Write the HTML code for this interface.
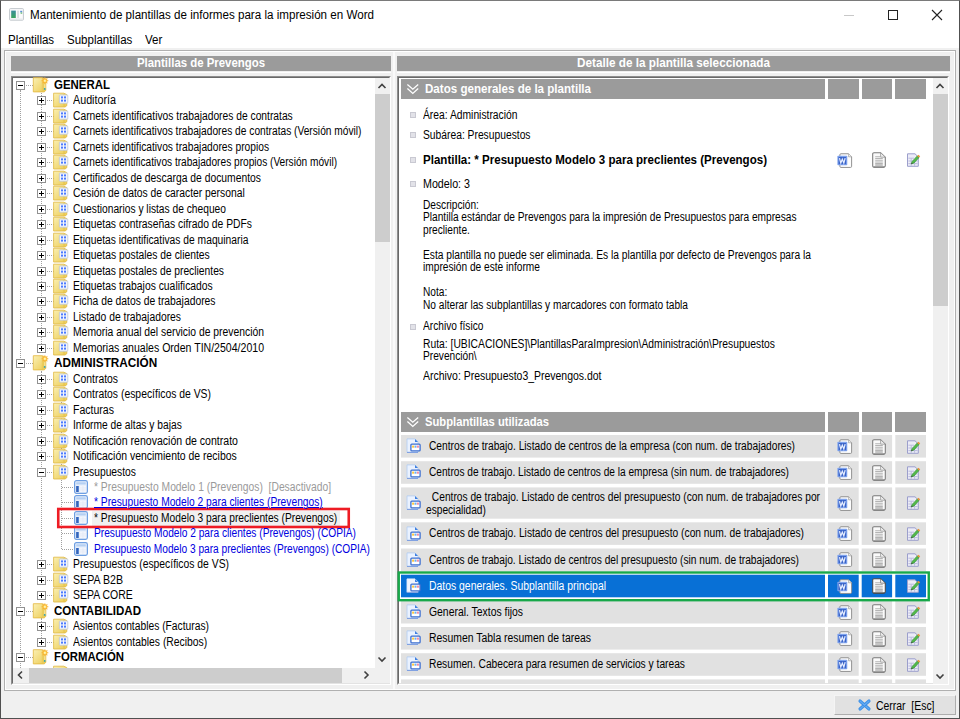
<!DOCTYPE html>
<html lang="es"><head><meta charset="utf-8"><title>Mantenimiento de plantillas de informes para la impresión en Word</title>
<style>
html,body{margin:0;padding:0;background:#f0f0f0;}
body{width:960px;height:719px;position:relative;overflow:hidden;font-family:'Liberation Sans',sans-serif;}
#w div{position:absolute;box-sizing:border-box;}
#w svg{position:absolute;overflow:visible;}
#w span.t{position:absolute;white-space:pre;transform-origin:0 50%;line-height:16px;height:16px;}
</style></head><body><div id="w">
<svg width="0" height="0" style="left:0;top:0"><defs><linearGradient id="fg1" x1="0" y1="0" x2="1" y2="1"><stop offset="0" stop-color="#faf0b4"/><stop offset="1" stop-color="#eccb52"/></linearGradient></defs></svg>
<div style="left:0px;top:0px;width:960px;height:719px;background:#f0f0f0;border:1px solid #505050;border-top-color:#7a7a7a;"></div>
<div style="left:1px;top:1px;width:958px;height:47px;background:#fff;"></div>
<svg style="left:8.5px;top:8px" width="15" height="13" viewBox="0 0 15 13"><defs><linearGradient id="tg" x1="0" y1="0" x2="0" y2="1"><stop offset="0" stop-color="#3c8c9c"/><stop offset="1" stop-color="#3aa55e"/></linearGradient></defs><rect x="0.6" y="0.6" width="13.8" height="11.6" rx="0.8" fill="#fbfbfc" stroke="#c3c8cd" stroke-width="1"/><rect x="2.2" y="2.6" width="4.6" height="7.4" fill="url(#tg)"/><rect x="8.3" y="2.6" width="1.5" height="7.4" fill="#d4d8dc"/><rect x="11.2" y="2.8" width="2" height="1.6" fill="#5b8fd6"/><rect x="11.6" y="4.4" width="1.6" height="1.4" fill="#6fc07a"/><rect x="1.4" y="10.6" width="12.2" height="1" fill="#e3e6e9"/></svg>
<div style="left:844px;top:15px;width:10px;height:1px;background:#c8c8c8;"></div>
<div style="left:888px;top:10px;width:10px;height:10px;background:transparent;border:1px solid #222;"></div>
<svg style="left:931px;top:9px" width="12" height="12" viewBox="0 0 12 12"><path d="M1 1 L11 11 M11 1 L1 11" stroke="#222" stroke-width="1.1" fill="none"/></svg>
<div style="left:4px;top:50px;width:952px;height:641px;background:transparent;border:1px solid #b0b0b0;"></div>
<div style="left:5px;top:51px;width:950px;height:639px;background:transparent;border:1px solid #fff;"></div>
<div style="left:393px;top:52px;width:2px;height:637px;background:#fafafa;"></div>
<div style="left:11px;top:56px;width:380px;height:15px;background:#9b9b9b;"></div>
<div style="left:11px;top:72px;width:380px;height:1px;background:#fff;"></div>
<div style="left:397px;top:56px;width:553px;height:15px;background:#9b9b9b;"></div>
<div style="left:397px;top:72px;width:553px;height:1px;background:#fff;"></div>
<div style="left:11px;top:76px;width:380px;height:609px;background:#fff;border:1px solid #8e8e8e;border-right-color:#fff;border-bottom-color:#fff;"></div>
<div style="left:12px;top:77px;width:378px;height:607px;background:#fff;border:1px solid #696969;border-right-color:#e3e3e3;border-bottom-color:#e3e3e3;"></div>
<div style="left:375px;top:78px;width:15px;height:590px;background:#f0f0f0;"></div>
<div style="left:375px;top:94px;width:15px;height:148px;background:#cdcdcd;"></div>
<div style="left:13px;top:668px;width:377px;height:15px;background:#f0f0f0;"></div>
<div style="left:29px;top:668px;width:313px;height:15px;background:#cdcdcd;"></div>
<svg style="left:378px;top:83px" width="8" height="6" viewBox="0 0 8 6"><path d="M0.5 5 L4 1.5 L7.5 5" stroke="#404040" stroke-width="1.6" fill="none"/></svg>
<svg style="left:378px;top:656px" width="8" height="6" viewBox="0 0 8 6"><path d="M0.5 1.5 L4 5 L7.5 1.5" stroke="#404040" stroke-width="1.6" fill="none"/></svg>
<svg style="left:17px;top:671px" width="6" height="8" viewBox="0 0 6 8"><path d="M5 0.5 L1.5 4 L5 7.5" stroke="#404040" stroke-width="1.6" fill="none"/></svg>
<svg style="left:363px;top:671px" width="6" height="8" viewBox="0 0 6 8"><path d="M1.5 0.5 L5 4 L1.5 7.5" stroke="#404040" stroke-width="1.6" fill="none"/></svg>
<div style="left:20px;top:90px;width:1px;height:578px;background:transparent;border-left:1px dotted #a0a0a0;"></div>
<div style="left:41px;top:93px;width:1px;height:251px;background:transparent;border-left:1px dotted #a0a0a0;"></div>
<div style="left:41px;top:371px;width:1px;height:208px;background:transparent;border-left:1px dotted #a0a0a0;"></div>
<div style="left:41px;top:618px;width:1px;height:24px;background:transparent;border-left:1px dotted #a0a0a0;"></div>
<div style="left:61px;top:395px;width:1px;height:154px;background:transparent;border-left:1px dotted #a0a0a0;"></div>
<div style="left:16px;top:81px;width:9px;height:9px;background:#fff;border:1px solid #919191;"></div>
<div style="left:18px;top:85px;width:5px;height:1px;background:#000;"></div>
<div style="left:26px;top:85px;width:7px;height:1px;background:transparent;border-top:1px dotted #a0a0a0;"></div>
<svg style="left:32px;top:77px" width="16" height="16" viewBox="0 0 16 16"><path d="M1.3 0.7 L10.3 0.7 L13.8 2.2 L13.8 13.4 L12.2 14.9 L1.3 14.9 Z" fill="url(#fg1)" stroke="#e3b63c" stroke-width="0.8"/><path d="M10.3 1 L10.3 14.6" stroke="#e6c250" stroke-width="0.6"/><path d="M10.6 1.4 L13.4 2.6 L13.4 13.2 L12 14.5 L10.6 14.5 Z" fill="#eacb58"/><path d="M12.8 6.5 L12.8 12" stroke="#f8ecb4" stroke-width="0.9"/><circle cx="12.7" cy="11.9" r="0.95" fill="#2fa0b4"/><polygon points="12.90,0.30 13.63,2.04 15.37,1.33 14.66,3.07 16.40,3.80 14.66,4.53 15.37,6.27 13.63,5.56 12.90,7.30 12.17,5.56 10.43,6.27 11.14,4.53 9.40,3.80 11.14,3.07 10.43,1.33 12.17,2.04" fill="#f6a623" stroke="#f9c04a" stroke-width="0.4"/><circle cx="12.9" cy="3.8" r="1.7" fill="#ffd95a"/><circle cx="12.9" cy="3.8" r="0.9" fill="#fff6c8"/></svg>
<div style="left:37px;top:96px;width:9px;height:9px;background:#fff;border:1px solid #919191;"></div>
<div style="left:39px;top:100px;width:5px;height:1px;background:#000;"></div>
<div style="left:41px;top:98px;width:1px;height:5px;background:#000;"></div>
<div style="left:47px;top:100px;width:7px;height:1px;background:transparent;border-top:1px dotted #a0a0a0;"></div>
<svg style="left:53px;top:92px" width="16" height="16" viewBox="0 0 16 16"><path d="M0.6 1.2 L10.8 1.2 L13.8 2.6 L13.8 13.4 L12.4 15 L0.6 15 Z" fill="url(#fg1)" stroke="#e0b740" stroke-width="0.8"/><path d="M11 1.8 L11 14.6" stroke="#e2bc48" stroke-width="0.8"/><rect x="6.4" y="3" width="8.4" height="8.2" rx="0.8" fill="#f4f6fb" stroke="#bcc6da" stroke-width="0.8"/><rect x="8" y="4.4" width="2" height="2" fill="#4c7bff"/><rect x="11" y="4.4" width="2" height="2" fill="#4c7bff"/><rect x="8" y="7.6" width="2" height="2" fill="#4c7bff"/><rect x="11" y="7.6" width="2" height="2" fill="#4c7bff"/></svg>
<div style="left:37px;top:112px;width:9px;height:9px;background:#fff;border:1px solid #919191;"></div>
<div style="left:39px;top:116px;width:5px;height:1px;background:#000;"></div>
<div style="left:41px;top:114px;width:1px;height:5px;background:#000;"></div>
<div style="left:47px;top:116px;width:7px;height:1px;background:transparent;border-top:1px dotted #a0a0a0;"></div>
<svg style="left:53px;top:108px" width="16" height="16" viewBox="0 0 16 16"><path d="M0.6 1.2 L10.8 1.2 L13.8 2.6 L13.8 13.4 L12.4 15 L0.6 15 Z" fill="url(#fg1)" stroke="#e0b740" stroke-width="0.8"/><path d="M11 1.8 L11 14.6" stroke="#e2bc48" stroke-width="0.8"/><rect x="6.4" y="3" width="8.4" height="8.2" rx="0.8" fill="#f4f6fb" stroke="#bcc6da" stroke-width="0.8"/><rect x="8" y="4.4" width="2" height="2" fill="#4c7bff"/><rect x="11" y="4.4" width="2" height="2" fill="#4c7bff"/><rect x="8" y="7.6" width="2" height="2" fill="#4c7bff"/><rect x="11" y="7.6" width="2" height="2" fill="#4c7bff"/></svg>
<div style="left:37px;top:127px;width:9px;height:9px;background:#fff;border:1px solid #919191;"></div>
<div style="left:39px;top:131px;width:5px;height:1px;background:#000;"></div>
<div style="left:41px;top:129px;width:1px;height:5px;background:#000;"></div>
<div style="left:47px;top:131px;width:7px;height:1px;background:transparent;border-top:1px dotted #a0a0a0;"></div>
<svg style="left:53px;top:123px" width="16" height="16" viewBox="0 0 16 16"><path d="M0.6 1.2 L10.8 1.2 L13.8 2.6 L13.8 13.4 L12.4 15 L0.6 15 Z" fill="url(#fg1)" stroke="#e0b740" stroke-width="0.8"/><path d="M11 1.8 L11 14.6" stroke="#e2bc48" stroke-width="0.8"/><rect x="6.4" y="3" width="8.4" height="8.2" rx="0.8" fill="#f4f6fb" stroke="#bcc6da" stroke-width="0.8"/><rect x="8" y="4.4" width="2" height="2" fill="#4c7bff"/><rect x="11" y="4.4" width="2" height="2" fill="#4c7bff"/><rect x="8" y="7.6" width="2" height="2" fill="#4c7bff"/><rect x="11" y="7.6" width="2" height="2" fill="#4c7bff"/></svg>
<div style="left:37px;top:143px;width:9px;height:9px;background:#fff;border:1px solid #919191;"></div>
<div style="left:39px;top:147px;width:5px;height:1px;background:#000;"></div>
<div style="left:41px;top:145px;width:1px;height:5px;background:#000;"></div>
<div style="left:47px;top:147px;width:7px;height:1px;background:transparent;border-top:1px dotted #a0a0a0;"></div>
<svg style="left:53px;top:139px" width="16" height="16" viewBox="0 0 16 16"><path d="M0.6 1.2 L10.8 1.2 L13.8 2.6 L13.8 13.4 L12.4 15 L0.6 15 Z" fill="url(#fg1)" stroke="#e0b740" stroke-width="0.8"/><path d="M11 1.8 L11 14.6" stroke="#e2bc48" stroke-width="0.8"/><rect x="6.4" y="3" width="8.4" height="8.2" rx="0.8" fill="#f4f6fb" stroke="#bcc6da" stroke-width="0.8"/><rect x="8" y="4.4" width="2" height="2" fill="#4c7bff"/><rect x="11" y="4.4" width="2" height="2" fill="#4c7bff"/><rect x="8" y="7.6" width="2" height="2" fill="#4c7bff"/><rect x="11" y="7.6" width="2" height="2" fill="#4c7bff"/></svg>
<div style="left:37px;top:158px;width:9px;height:9px;background:#fff;border:1px solid #919191;"></div>
<div style="left:39px;top:162px;width:5px;height:1px;background:#000;"></div>
<div style="left:41px;top:160px;width:1px;height:5px;background:#000;"></div>
<div style="left:47px;top:162px;width:7px;height:1px;background:transparent;border-top:1px dotted #a0a0a0;"></div>
<svg style="left:53px;top:154px" width="16" height="16" viewBox="0 0 16 16"><path d="M0.6 1.2 L10.8 1.2 L13.8 2.6 L13.8 13.4 L12.4 15 L0.6 15 Z" fill="url(#fg1)" stroke="#e0b740" stroke-width="0.8"/><path d="M11 1.8 L11 14.6" stroke="#e2bc48" stroke-width="0.8"/><rect x="6.4" y="3" width="8.4" height="8.2" rx="0.8" fill="#f4f6fb" stroke="#bcc6da" stroke-width="0.8"/><rect x="8" y="4.4" width="2" height="2" fill="#4c7bff"/><rect x="11" y="4.4" width="2" height="2" fill="#4c7bff"/><rect x="8" y="7.6" width="2" height="2" fill="#4c7bff"/><rect x="11" y="7.6" width="2" height="2" fill="#4c7bff"/></svg>
<div style="left:37px;top:174px;width:9px;height:9px;background:#fff;border:1px solid #919191;"></div>
<div style="left:39px;top:178px;width:5px;height:1px;background:#000;"></div>
<div style="left:41px;top:176px;width:1px;height:5px;background:#000;"></div>
<div style="left:47px;top:178px;width:7px;height:1px;background:transparent;border-top:1px dotted #a0a0a0;"></div>
<svg style="left:53px;top:170px" width="16" height="16" viewBox="0 0 16 16"><path d="M0.6 1.2 L10.8 1.2 L13.8 2.6 L13.8 13.4 L12.4 15 L0.6 15 Z" fill="url(#fg1)" stroke="#e0b740" stroke-width="0.8"/><path d="M11 1.8 L11 14.6" stroke="#e2bc48" stroke-width="0.8"/><rect x="6.4" y="3" width="8.4" height="8.2" rx="0.8" fill="#f4f6fb" stroke="#bcc6da" stroke-width="0.8"/><rect x="8" y="4.4" width="2" height="2" fill="#4c7bff"/><rect x="11" y="4.4" width="2" height="2" fill="#4c7bff"/><rect x="8" y="7.6" width="2" height="2" fill="#4c7bff"/><rect x="11" y="7.6" width="2" height="2" fill="#4c7bff"/></svg>
<div style="left:37px;top:189px;width:9px;height:9px;background:#fff;border:1px solid #919191;"></div>
<div style="left:39px;top:193px;width:5px;height:1px;background:#000;"></div>
<div style="left:41px;top:191px;width:1px;height:5px;background:#000;"></div>
<div style="left:47px;top:193px;width:7px;height:1px;background:transparent;border-top:1px dotted #a0a0a0;"></div>
<svg style="left:53px;top:185px" width="16" height="16" viewBox="0 0 16 16"><path d="M0.6 1.2 L10.8 1.2 L13.8 2.6 L13.8 13.4 L12.4 15 L0.6 15 Z" fill="url(#fg1)" stroke="#e0b740" stroke-width="0.8"/><path d="M11 1.8 L11 14.6" stroke="#e2bc48" stroke-width="0.8"/><rect x="6.4" y="3" width="8.4" height="8.2" rx="0.8" fill="#f4f6fb" stroke="#bcc6da" stroke-width="0.8"/><rect x="8" y="4.4" width="2" height="2" fill="#4c7bff"/><rect x="11" y="4.4" width="2" height="2" fill="#4c7bff"/><rect x="8" y="7.6" width="2" height="2" fill="#4c7bff"/><rect x="11" y="7.6" width="2" height="2" fill="#4c7bff"/></svg>
<div style="left:37px;top:205px;width:9px;height:9px;background:#fff;border:1px solid #919191;"></div>
<div style="left:39px;top:209px;width:5px;height:1px;background:#000;"></div>
<div style="left:41px;top:207px;width:1px;height:5px;background:#000;"></div>
<div style="left:47px;top:209px;width:7px;height:1px;background:transparent;border-top:1px dotted #a0a0a0;"></div>
<svg style="left:53px;top:201px" width="16" height="16" viewBox="0 0 16 16"><path d="M0.6 1.2 L10.8 1.2 L13.8 2.6 L13.8 13.4 L12.4 15 L0.6 15 Z" fill="url(#fg1)" stroke="#e0b740" stroke-width="0.8"/><path d="M11 1.8 L11 14.6" stroke="#e2bc48" stroke-width="0.8"/><rect x="6.4" y="3" width="8.4" height="8.2" rx="0.8" fill="#f4f6fb" stroke="#bcc6da" stroke-width="0.8"/><rect x="8" y="4.4" width="2" height="2" fill="#4c7bff"/><rect x="11" y="4.4" width="2" height="2" fill="#4c7bff"/><rect x="8" y="7.6" width="2" height="2" fill="#4c7bff"/><rect x="11" y="7.6" width="2" height="2" fill="#4c7bff"/></svg>
<div style="left:37px;top:220px;width:9px;height:9px;background:#fff;border:1px solid #919191;"></div>
<div style="left:39px;top:224px;width:5px;height:1px;background:#000;"></div>
<div style="left:41px;top:222px;width:1px;height:5px;background:#000;"></div>
<div style="left:47px;top:224px;width:7px;height:1px;background:transparent;border-top:1px dotted #a0a0a0;"></div>
<svg style="left:53px;top:216px" width="16" height="16" viewBox="0 0 16 16"><path d="M0.6 1.2 L10.8 1.2 L13.8 2.6 L13.8 13.4 L12.4 15 L0.6 15 Z" fill="url(#fg1)" stroke="#e0b740" stroke-width="0.8"/><path d="M11 1.8 L11 14.6" stroke="#e2bc48" stroke-width="0.8"/><rect x="6.4" y="3" width="8.4" height="8.2" rx="0.8" fill="#f4f6fb" stroke="#bcc6da" stroke-width="0.8"/><rect x="8" y="4.4" width="2" height="2" fill="#4c7bff"/><rect x="11" y="4.4" width="2" height="2" fill="#4c7bff"/><rect x="8" y="7.6" width="2" height="2" fill="#4c7bff"/><rect x="11" y="7.6" width="2" height="2" fill="#4c7bff"/></svg>
<div style="left:37px;top:236px;width:9px;height:9px;background:#fff;border:1px solid #919191;"></div>
<div style="left:39px;top:240px;width:5px;height:1px;background:#000;"></div>
<div style="left:41px;top:238px;width:1px;height:5px;background:#000;"></div>
<div style="left:47px;top:240px;width:7px;height:1px;background:transparent;border-top:1px dotted #a0a0a0;"></div>
<svg style="left:53px;top:232px" width="16" height="16" viewBox="0 0 16 16"><path d="M0.6 1.2 L10.8 1.2 L13.8 2.6 L13.8 13.4 L12.4 15 L0.6 15 Z" fill="url(#fg1)" stroke="#e0b740" stroke-width="0.8"/><path d="M11 1.8 L11 14.6" stroke="#e2bc48" stroke-width="0.8"/><rect x="6.4" y="3" width="8.4" height="8.2" rx="0.8" fill="#f4f6fb" stroke="#bcc6da" stroke-width="0.8"/><rect x="8" y="4.4" width="2" height="2" fill="#4c7bff"/><rect x="11" y="4.4" width="2" height="2" fill="#4c7bff"/><rect x="8" y="7.6" width="2" height="2" fill="#4c7bff"/><rect x="11" y="7.6" width="2" height="2" fill="#4c7bff"/></svg>
<div style="left:37px;top:251px;width:9px;height:9px;background:#fff;border:1px solid #919191;"></div>
<div style="left:39px;top:255px;width:5px;height:1px;background:#000;"></div>
<div style="left:41px;top:253px;width:1px;height:5px;background:#000;"></div>
<div style="left:47px;top:255px;width:7px;height:1px;background:transparent;border-top:1px dotted #a0a0a0;"></div>
<svg style="left:53px;top:247px" width="16" height="16" viewBox="0 0 16 16"><path d="M0.6 1.2 L10.8 1.2 L13.8 2.6 L13.8 13.4 L12.4 15 L0.6 15 Z" fill="url(#fg1)" stroke="#e0b740" stroke-width="0.8"/><path d="M11 1.8 L11 14.6" stroke="#e2bc48" stroke-width="0.8"/><rect x="6.4" y="3" width="8.4" height="8.2" rx="0.8" fill="#f4f6fb" stroke="#bcc6da" stroke-width="0.8"/><rect x="8" y="4.4" width="2" height="2" fill="#4c7bff"/><rect x="11" y="4.4" width="2" height="2" fill="#4c7bff"/><rect x="8" y="7.6" width="2" height="2" fill="#4c7bff"/><rect x="11" y="7.6" width="2" height="2" fill="#4c7bff"/></svg>
<div style="left:37px;top:267px;width:9px;height:9px;background:#fff;border:1px solid #919191;"></div>
<div style="left:39px;top:271px;width:5px;height:1px;background:#000;"></div>
<div style="left:41px;top:269px;width:1px;height:5px;background:#000;"></div>
<div style="left:47px;top:271px;width:7px;height:1px;background:transparent;border-top:1px dotted #a0a0a0;"></div>
<svg style="left:53px;top:263px" width="16" height="16" viewBox="0 0 16 16"><path d="M0.6 1.2 L10.8 1.2 L13.8 2.6 L13.8 13.4 L12.4 15 L0.6 15 Z" fill="url(#fg1)" stroke="#e0b740" stroke-width="0.8"/><path d="M11 1.8 L11 14.6" stroke="#e2bc48" stroke-width="0.8"/><rect x="6.4" y="3" width="8.4" height="8.2" rx="0.8" fill="#f4f6fb" stroke="#bcc6da" stroke-width="0.8"/><rect x="8" y="4.4" width="2" height="2" fill="#4c7bff"/><rect x="11" y="4.4" width="2" height="2" fill="#4c7bff"/><rect x="8" y="7.6" width="2" height="2" fill="#4c7bff"/><rect x="11" y="7.6" width="2" height="2" fill="#4c7bff"/></svg>
<div style="left:37px;top:282px;width:9px;height:9px;background:#fff;border:1px solid #919191;"></div>
<div style="left:39px;top:286px;width:5px;height:1px;background:#000;"></div>
<div style="left:41px;top:284px;width:1px;height:5px;background:#000;"></div>
<div style="left:47px;top:286px;width:7px;height:1px;background:transparent;border-top:1px dotted #a0a0a0;"></div>
<svg style="left:53px;top:278px" width="16" height="16" viewBox="0 0 16 16"><path d="M0.6 1.2 L10.8 1.2 L13.8 2.6 L13.8 13.4 L12.4 15 L0.6 15 Z" fill="url(#fg1)" stroke="#e0b740" stroke-width="0.8"/><path d="M11 1.8 L11 14.6" stroke="#e2bc48" stroke-width="0.8"/><rect x="6.4" y="3" width="8.4" height="8.2" rx="0.8" fill="#f4f6fb" stroke="#bcc6da" stroke-width="0.8"/><rect x="8" y="4.4" width="2" height="2" fill="#4c7bff"/><rect x="11" y="4.4" width="2" height="2" fill="#4c7bff"/><rect x="8" y="7.6" width="2" height="2" fill="#4c7bff"/><rect x="11" y="7.6" width="2" height="2" fill="#4c7bff"/></svg>
<div style="left:37px;top:297px;width:9px;height:9px;background:#fff;border:1px solid #919191;"></div>
<div style="left:39px;top:301px;width:5px;height:1px;background:#000;"></div>
<div style="left:41px;top:299px;width:1px;height:5px;background:#000;"></div>
<div style="left:47px;top:301px;width:7px;height:1px;background:transparent;border-top:1px dotted #a0a0a0;"></div>
<svg style="left:53px;top:293px" width="16" height="16" viewBox="0 0 16 16"><path d="M0.6 1.2 L10.8 1.2 L13.8 2.6 L13.8 13.4 L12.4 15 L0.6 15 Z" fill="url(#fg1)" stroke="#e0b740" stroke-width="0.8"/><path d="M11 1.8 L11 14.6" stroke="#e2bc48" stroke-width="0.8"/><rect x="6.4" y="3" width="8.4" height="8.2" rx="0.8" fill="#f4f6fb" stroke="#bcc6da" stroke-width="0.8"/><rect x="8" y="4.4" width="2" height="2" fill="#4c7bff"/><rect x="11" y="4.4" width="2" height="2" fill="#4c7bff"/><rect x="8" y="7.6" width="2" height="2" fill="#4c7bff"/><rect x="11" y="7.6" width="2" height="2" fill="#4c7bff"/></svg>
<div style="left:37px;top:313px;width:9px;height:9px;background:#fff;border:1px solid #919191;"></div>
<div style="left:39px;top:317px;width:5px;height:1px;background:#000;"></div>
<div style="left:41px;top:315px;width:1px;height:5px;background:#000;"></div>
<div style="left:47px;top:317px;width:7px;height:1px;background:transparent;border-top:1px dotted #a0a0a0;"></div>
<svg style="left:53px;top:309px" width="16" height="16" viewBox="0 0 16 16"><path d="M0.6 1.2 L10.8 1.2 L13.8 2.6 L13.8 13.4 L12.4 15 L0.6 15 Z" fill="url(#fg1)" stroke="#e0b740" stroke-width="0.8"/><path d="M11 1.8 L11 14.6" stroke="#e2bc48" stroke-width="0.8"/><rect x="6.4" y="3" width="8.4" height="8.2" rx="0.8" fill="#f4f6fb" stroke="#bcc6da" stroke-width="0.8"/><rect x="8" y="4.4" width="2" height="2" fill="#4c7bff"/><rect x="11" y="4.4" width="2" height="2" fill="#4c7bff"/><rect x="8" y="7.6" width="2" height="2" fill="#4c7bff"/><rect x="11" y="7.6" width="2" height="2" fill="#4c7bff"/></svg>
<div style="left:37px;top:328px;width:9px;height:9px;background:#fff;border:1px solid #919191;"></div>
<div style="left:39px;top:332px;width:5px;height:1px;background:#000;"></div>
<div style="left:41px;top:330px;width:1px;height:5px;background:#000;"></div>
<div style="left:47px;top:332px;width:7px;height:1px;background:transparent;border-top:1px dotted #a0a0a0;"></div>
<svg style="left:53px;top:324px" width="16" height="16" viewBox="0 0 16 16"><path d="M0.6 1.2 L10.8 1.2 L13.8 2.6 L13.8 13.4 L12.4 15 L0.6 15 Z" fill="url(#fg1)" stroke="#e0b740" stroke-width="0.8"/><path d="M11 1.8 L11 14.6" stroke="#e2bc48" stroke-width="0.8"/><rect x="6.4" y="3" width="8.4" height="8.2" rx="0.8" fill="#f4f6fb" stroke="#bcc6da" stroke-width="0.8"/><rect x="8" y="4.4" width="2" height="2" fill="#4c7bff"/><rect x="11" y="4.4" width="2" height="2" fill="#4c7bff"/><rect x="8" y="7.6" width="2" height="2" fill="#4c7bff"/><rect x="11" y="7.6" width="2" height="2" fill="#4c7bff"/></svg>
<div style="left:37px;top:344px;width:9px;height:9px;background:#fff;border:1px solid #919191;"></div>
<div style="left:39px;top:348px;width:5px;height:1px;background:#000;"></div>
<div style="left:41px;top:346px;width:1px;height:5px;background:#000;"></div>
<div style="left:47px;top:348px;width:7px;height:1px;background:transparent;border-top:1px dotted #a0a0a0;"></div>
<svg style="left:53px;top:340px" width="16" height="16" viewBox="0 0 16 16"><path d="M0.6 1.2 L10.8 1.2 L13.8 2.6 L13.8 13.4 L12.4 15 L0.6 15 Z" fill="url(#fg1)" stroke="#e0b740" stroke-width="0.8"/><path d="M11 1.8 L11 14.6" stroke="#e2bc48" stroke-width="0.8"/><rect x="6.4" y="3" width="8.4" height="8.2" rx="0.8" fill="#f4f6fb" stroke="#bcc6da" stroke-width="0.8"/><rect x="8" y="4.4" width="2" height="2" fill="#4c7bff"/><rect x="11" y="4.4" width="2" height="2" fill="#4c7bff"/><rect x="8" y="7.6" width="2" height="2" fill="#4c7bff"/><rect x="11" y="7.6" width="2" height="2" fill="#4c7bff"/></svg>
<div style="left:16px;top:359px;width:9px;height:9px;background:#fff;border:1px solid #919191;"></div>
<div style="left:18px;top:363px;width:5px;height:1px;background:#000;"></div>
<div style="left:26px;top:363px;width:7px;height:1px;background:transparent;border-top:1px dotted #a0a0a0;"></div>
<svg style="left:32px;top:355px" width="16" height="16" viewBox="0 0 16 16"><path d="M1.3 0.7 L10.3 0.7 L13.8 2.2 L13.8 13.4 L12.2 14.9 L1.3 14.9 Z" fill="url(#fg1)" stroke="#e3b63c" stroke-width="0.8"/><path d="M10.3 1 L10.3 14.6" stroke="#e6c250" stroke-width="0.6"/><path d="M10.6 1.4 L13.4 2.6 L13.4 13.2 L12 14.5 L10.6 14.5 Z" fill="#eacb58"/><path d="M12.8 6.5 L12.8 12" stroke="#f8ecb4" stroke-width="0.9"/><circle cx="12.7" cy="11.9" r="0.95" fill="#2fa0b4"/><polygon points="12.90,0.30 13.63,2.04 15.37,1.33 14.66,3.07 16.40,3.80 14.66,4.53 15.37,6.27 13.63,5.56 12.90,7.30 12.17,5.56 10.43,6.27 11.14,4.53 9.40,3.80 11.14,3.07 10.43,1.33 12.17,2.04" fill="#f6a623" stroke="#f9c04a" stroke-width="0.4"/><circle cx="12.9" cy="3.8" r="1.7" fill="#ffd95a"/><circle cx="12.9" cy="3.8" r="0.9" fill="#fff6c8"/></svg>
<div style="left:37px;top:375px;width:9px;height:9px;background:#fff;border:1px solid #919191;"></div>
<div style="left:39px;top:379px;width:5px;height:1px;background:#000;"></div>
<div style="left:41px;top:377px;width:1px;height:5px;background:#000;"></div>
<div style="left:47px;top:379px;width:7px;height:1px;background:transparent;border-top:1px dotted #a0a0a0;"></div>
<svg style="left:53px;top:371px" width="16" height="16" viewBox="0 0 16 16"><path d="M0.6 1.2 L10.8 1.2 L13.8 2.6 L13.8 13.4 L12.4 15 L0.6 15 Z" fill="url(#fg1)" stroke="#e0b740" stroke-width="0.8"/><path d="M11 1.8 L11 14.6" stroke="#e2bc48" stroke-width="0.8"/><rect x="6.4" y="3" width="8.4" height="8.2" rx="0.8" fill="#f4f6fb" stroke="#bcc6da" stroke-width="0.8"/><rect x="8" y="4.4" width="2" height="2" fill="#4c7bff"/><rect x="11" y="4.4" width="2" height="2" fill="#4c7bff"/><rect x="8" y="7.6" width="2" height="2" fill="#4c7bff"/><rect x="11" y="7.6" width="2" height="2" fill="#4c7bff"/></svg>
<div style="left:37px;top:390px;width:9px;height:9px;background:#fff;border:1px solid #919191;"></div>
<div style="left:39px;top:394px;width:5px;height:1px;background:#000;"></div>
<div style="left:41px;top:392px;width:1px;height:5px;background:#000;"></div>
<div style="left:47px;top:394px;width:7px;height:1px;background:transparent;border-top:1px dotted #a0a0a0;"></div>
<svg style="left:53px;top:386px" width="16" height="16" viewBox="0 0 16 16"><path d="M0.6 1.2 L10.8 1.2 L13.8 2.6 L13.8 13.4 L12.4 15 L0.6 15 Z" fill="url(#fg1)" stroke="#e0b740" stroke-width="0.8"/><path d="M11 1.8 L11 14.6" stroke="#e2bc48" stroke-width="0.8"/><rect x="6.4" y="3" width="8.4" height="8.2" rx="0.8" fill="#f4f6fb" stroke="#bcc6da" stroke-width="0.8"/><rect x="8" y="4.4" width="2" height="2" fill="#4c7bff"/><rect x="11" y="4.4" width="2" height="2" fill="#4c7bff"/><rect x="8" y="7.6" width="2" height="2" fill="#4c7bff"/><rect x="11" y="7.6" width="2" height="2" fill="#4c7bff"/></svg>
<div style="left:37px;top:406px;width:9px;height:9px;background:#fff;border:1px solid #919191;"></div>
<div style="left:39px;top:410px;width:5px;height:1px;background:#000;"></div>
<div style="left:41px;top:408px;width:1px;height:5px;background:#000;"></div>
<div style="left:47px;top:410px;width:7px;height:1px;background:transparent;border-top:1px dotted #a0a0a0;"></div>
<svg style="left:53px;top:402px" width="16" height="16" viewBox="0 0 16 16"><path d="M0.6 1.2 L10.8 1.2 L13.8 2.6 L13.8 13.4 L12.4 15 L0.6 15 Z" fill="url(#fg1)" stroke="#e0b740" stroke-width="0.8"/><path d="M11 1.8 L11 14.6" stroke="#e2bc48" stroke-width="0.8"/><rect x="6.4" y="3" width="8.4" height="8.2" rx="0.8" fill="#f4f6fb" stroke="#bcc6da" stroke-width="0.8"/><rect x="8" y="4.4" width="2" height="2" fill="#4c7bff"/><rect x="11" y="4.4" width="2" height="2" fill="#4c7bff"/><rect x="8" y="7.6" width="2" height="2" fill="#4c7bff"/><rect x="11" y="7.6" width="2" height="2" fill="#4c7bff"/></svg>
<div style="left:37px;top:421px;width:9px;height:9px;background:#fff;border:1px solid #919191;"></div>
<div style="left:39px;top:425px;width:5px;height:1px;background:#000;"></div>
<div style="left:41px;top:423px;width:1px;height:5px;background:#000;"></div>
<div style="left:47px;top:425px;width:7px;height:1px;background:transparent;border-top:1px dotted #a0a0a0;"></div>
<svg style="left:53px;top:417px" width="16" height="16" viewBox="0 0 16 16"><path d="M0.6 1.2 L10.8 1.2 L13.8 2.6 L13.8 13.4 L12.4 15 L0.6 15 Z" fill="url(#fg1)" stroke="#e0b740" stroke-width="0.8"/><path d="M11 1.8 L11 14.6" stroke="#e2bc48" stroke-width="0.8"/><rect x="6.4" y="3" width="8.4" height="8.2" rx="0.8" fill="#f4f6fb" stroke="#bcc6da" stroke-width="0.8"/><rect x="8" y="4.4" width="2" height="2" fill="#4c7bff"/><rect x="11" y="4.4" width="2" height="2" fill="#4c7bff"/><rect x="8" y="7.6" width="2" height="2" fill="#4c7bff"/><rect x="11" y="7.6" width="2" height="2" fill="#4c7bff"/></svg>
<div style="left:37px;top:437px;width:9px;height:9px;background:#fff;border:1px solid #919191;"></div>
<div style="left:39px;top:441px;width:5px;height:1px;background:#000;"></div>
<div style="left:41px;top:439px;width:1px;height:5px;background:#000;"></div>
<div style="left:47px;top:441px;width:7px;height:1px;background:transparent;border-top:1px dotted #a0a0a0;"></div>
<svg style="left:53px;top:433px" width="16" height="16" viewBox="0 0 16 16"><path d="M0.6 1.2 L10.8 1.2 L13.8 2.6 L13.8 13.4 L12.4 15 L0.6 15 Z" fill="url(#fg1)" stroke="#e0b740" stroke-width="0.8"/><path d="M11 1.8 L11 14.6" stroke="#e2bc48" stroke-width="0.8"/><rect x="6.4" y="3" width="8.4" height="8.2" rx="0.8" fill="#f4f6fb" stroke="#bcc6da" stroke-width="0.8"/><rect x="8" y="4.4" width="2" height="2" fill="#4c7bff"/><rect x="11" y="4.4" width="2" height="2" fill="#4c7bff"/><rect x="8" y="7.6" width="2" height="2" fill="#4c7bff"/><rect x="11" y="7.6" width="2" height="2" fill="#4c7bff"/></svg>
<div style="left:37px;top:452px;width:9px;height:9px;background:#fff;border:1px solid #919191;"></div>
<div style="left:39px;top:456px;width:5px;height:1px;background:#000;"></div>
<div style="left:41px;top:454px;width:1px;height:5px;background:#000;"></div>
<div style="left:47px;top:456px;width:7px;height:1px;background:transparent;border-top:1px dotted #a0a0a0;"></div>
<svg style="left:53px;top:448px" width="16" height="16" viewBox="0 0 16 16"><path d="M0.6 1.2 L10.8 1.2 L13.8 2.6 L13.8 13.4 L12.4 15 L0.6 15 Z" fill="url(#fg1)" stroke="#e0b740" stroke-width="0.8"/><path d="M11 1.8 L11 14.6" stroke="#e2bc48" stroke-width="0.8"/><rect x="6.4" y="3" width="8.4" height="8.2" rx="0.8" fill="#f4f6fb" stroke="#bcc6da" stroke-width="0.8"/><rect x="8" y="4.4" width="2" height="2" fill="#4c7bff"/><rect x="11" y="4.4" width="2" height="2" fill="#4c7bff"/><rect x="8" y="7.6" width="2" height="2" fill="#4c7bff"/><rect x="11" y="7.6" width="2" height="2" fill="#4c7bff"/></svg>
<div style="left:37px;top:468px;width:9px;height:9px;background:#fff;border:1px solid #919191;"></div>
<div style="left:39px;top:472px;width:5px;height:1px;background:#000;"></div>
<div style="left:47px;top:472px;width:7px;height:1px;background:transparent;border-top:1px dotted #a0a0a0;"></div>
<svg style="left:53px;top:464px" width="16" height="16" viewBox="0 0 16 16"><path d="M0.6 1.2 L10.8 1.2 L13.8 2.6 L13.8 13.4 L12.4 15 L0.6 15 Z" fill="url(#fg1)" stroke="#e0b740" stroke-width="0.8"/><path d="M11 1.8 L11 14.6" stroke="#e2bc48" stroke-width="0.8"/><rect x="6.4" y="3" width="8.4" height="8.2" rx="0.8" fill="#f4f6fb" stroke="#bcc6da" stroke-width="0.8"/><rect x="8" y="4.4" width="2" height="2" fill="#4c7bff"/><rect x="11" y="4.4" width="2" height="2" fill="#4c7bff"/><rect x="8" y="7.6" width="2" height="2" fill="#4c7bff"/><rect x="11" y="7.6" width="2" height="2" fill="#4c7bff"/></svg>
<div style="left:62px;top:487px;width:13px;height:1px;background:transparent;border-top:1px dotted #a0a0a0;"></div>
<svg style="left:74px;top:480px" width="14" height="14" viewBox="0 0 14 14"><rect x="0.6" y="0.6" width="12.8" height="12.8" rx="1.8" fill="#e9f0fb" stroke="#6e9fe2" stroke-width="1.2"/><rect x="2.2" y="2.2" width="9.6" height="2.3" rx="0.5" fill="#b5d0f3"/><rect x="2.4" y="6" width="2.4" height="6" fill="#3a6fc8"/><rect x="2.4" y="6" width="1" height="6" fill="#2a58ad"/><rect x="6" y="6" width="6" height="6" fill="#f3f6fc"/><path d="M6 8 H12 M6 10 H12 M9 6 V12" stroke="#dfe6f3" stroke-width="0.6"/></svg>
<div style="left:62px;top:502px;width:13px;height:1px;background:transparent;border-top:1px dotted #a0a0a0;"></div>
<svg style="left:74px;top:495px" width="14" height="14" viewBox="0 0 14 14"><rect x="0.6" y="0.6" width="12.8" height="12.8" rx="1.8" fill="#e9f0fb" stroke="#6e9fe2" stroke-width="1.2"/><rect x="2.2" y="2.2" width="9.6" height="2.3" rx="0.5" fill="#b5d0f3"/><rect x="2.4" y="6" width="2.4" height="6" fill="#3a6fc8"/><rect x="2.4" y="6" width="1" height="6" fill="#2a58ad"/><rect x="6" y="6" width="6" height="6" fill="#f3f6fc"/><path d="M6 8 H12 M6 10 H12 M9 6 V12" stroke="#dfe6f3" stroke-width="0.6"/></svg>
<div style="left:62px;top:518px;width:13px;height:1px;background:transparent;border-top:1px dotted #a0a0a0;"></div>
<svg style="left:74px;top:511px" width="14" height="14" viewBox="0 0 14 14"><rect x="0.6" y="0.6" width="12.8" height="12.8" rx="1.8" fill="#e9f0fb" stroke="#6e9fe2" stroke-width="1.2"/><rect x="2.2" y="2.2" width="9.6" height="2.3" rx="0.5" fill="#b5d0f3"/><rect x="2.4" y="6" width="2.4" height="6" fill="#3a6fc8"/><rect x="2.4" y="6" width="1" height="6" fill="#2a58ad"/><rect x="6" y="6" width="6" height="6" fill="#f3f6fc"/><path d="M6 8 H12 M6 10 H12 M9 6 V12" stroke="#dfe6f3" stroke-width="0.6"/></svg>
<div style="left:92px;top:511px;width:248px;height:15px;background:#f0f0f0;"></div>
<div style="left:62px;top:533px;width:13px;height:1px;background:transparent;border-top:1px dotted #a0a0a0;"></div>
<svg style="left:74px;top:526px" width="14" height="14" viewBox="0 0 14 14"><rect x="0.6" y="0.6" width="12.8" height="12.8" rx="1.8" fill="#e9f0fb" stroke="#6e9fe2" stroke-width="1.2"/><rect x="2.2" y="2.2" width="9.6" height="2.3" rx="0.5" fill="#b5d0f3"/><rect x="2.4" y="6" width="2.4" height="6" fill="#3a6fc8"/><rect x="2.4" y="6" width="1" height="6" fill="#2a58ad"/><rect x="6" y="6" width="6" height="6" fill="#f3f6fc"/><path d="M6 8 H12 M6 10 H12 M9 6 V12" stroke="#dfe6f3" stroke-width="0.6"/></svg>
<div style="left:62px;top:549px;width:13px;height:1px;background:transparent;border-top:1px dotted #a0a0a0;"></div>
<svg style="left:74px;top:542px" width="14" height="14" viewBox="0 0 14 14"><rect x="0.6" y="0.6" width="12.8" height="12.8" rx="1.8" fill="#e9f0fb" stroke="#6e9fe2" stroke-width="1.2"/><rect x="2.2" y="2.2" width="9.6" height="2.3" rx="0.5" fill="#b5d0f3"/><rect x="2.4" y="6" width="2.4" height="6" fill="#3a6fc8"/><rect x="2.4" y="6" width="1" height="6" fill="#2a58ad"/><rect x="6" y="6" width="6" height="6" fill="#f3f6fc"/><path d="M6 8 H12 M6 10 H12 M9 6 V12" stroke="#dfe6f3" stroke-width="0.6"/></svg>
<div style="left:37px;top:560px;width:9px;height:9px;background:#fff;border:1px solid #919191;"></div>
<div style="left:39px;top:564px;width:5px;height:1px;background:#000;"></div>
<div style="left:41px;top:562px;width:1px;height:5px;background:#000;"></div>
<div style="left:47px;top:564px;width:7px;height:1px;background:transparent;border-top:1px dotted #a0a0a0;"></div>
<svg style="left:53px;top:556px" width="16" height="16" viewBox="0 0 16 16"><path d="M0.6 1.2 L10.8 1.2 L13.8 2.6 L13.8 13.4 L12.4 15 L0.6 15 Z" fill="url(#fg1)" stroke="#e0b740" stroke-width="0.8"/><path d="M11 1.8 L11 14.6" stroke="#e2bc48" stroke-width="0.8"/><rect x="6.4" y="3" width="8.4" height="8.2" rx="0.8" fill="#f4f6fb" stroke="#bcc6da" stroke-width="0.8"/><rect x="8" y="4.4" width="2" height="2" fill="#4c7bff"/><rect x="11" y="4.4" width="2" height="2" fill="#4c7bff"/><rect x="8" y="7.6" width="2" height="2" fill="#4c7bff"/><rect x="11" y="7.6" width="2" height="2" fill="#4c7bff"/></svg>
<div style="left:37px;top:576px;width:9px;height:9px;background:#fff;border:1px solid #919191;"></div>
<div style="left:39px;top:580px;width:5px;height:1px;background:#000;"></div>
<div style="left:41px;top:578px;width:1px;height:5px;background:#000;"></div>
<div style="left:47px;top:580px;width:7px;height:1px;background:transparent;border-top:1px dotted #a0a0a0;"></div>
<svg style="left:53px;top:572px" width="16" height="16" viewBox="0 0 16 16"><path d="M0.6 1.2 L10.8 1.2 L13.8 2.6 L13.8 13.4 L12.4 15 L0.6 15 Z" fill="url(#fg1)" stroke="#e0b740" stroke-width="0.8"/><path d="M11 1.8 L11 14.6" stroke="#e2bc48" stroke-width="0.8"/><rect x="6.4" y="3" width="8.4" height="8.2" rx="0.8" fill="#f4f6fb" stroke="#bcc6da" stroke-width="0.8"/><rect x="8" y="4.4" width="2" height="2" fill="#4c7bff"/><rect x="11" y="4.4" width="2" height="2" fill="#4c7bff"/><rect x="8" y="7.6" width="2" height="2" fill="#4c7bff"/><rect x="11" y="7.6" width="2" height="2" fill="#4c7bff"/></svg>
<div style="left:37px;top:591px;width:9px;height:9px;background:#fff;border:1px solid #919191;"></div>
<div style="left:39px;top:595px;width:5px;height:1px;background:#000;"></div>
<div style="left:41px;top:593px;width:1px;height:5px;background:#000;"></div>
<div style="left:47px;top:595px;width:7px;height:1px;background:transparent;border-top:1px dotted #a0a0a0;"></div>
<svg style="left:53px;top:587px" width="16" height="16" viewBox="0 0 16 16"><path d="M0.6 1.2 L10.8 1.2 L13.8 2.6 L13.8 13.4 L12.4 15 L0.6 15 Z" fill="url(#fg1)" stroke="#e0b740" stroke-width="0.8"/><path d="M11 1.8 L11 14.6" stroke="#e2bc48" stroke-width="0.8"/><rect x="6.4" y="3" width="8.4" height="8.2" rx="0.8" fill="#f4f6fb" stroke="#bcc6da" stroke-width="0.8"/><rect x="8" y="4.4" width="2" height="2" fill="#4c7bff"/><rect x="11" y="4.4" width="2" height="2" fill="#4c7bff"/><rect x="8" y="7.6" width="2" height="2" fill="#4c7bff"/><rect x="11" y="7.6" width="2" height="2" fill="#4c7bff"/></svg>
<div style="left:16px;top:607px;width:9px;height:9px;background:#fff;border:1px solid #919191;"></div>
<div style="left:18px;top:611px;width:5px;height:1px;background:#000;"></div>
<div style="left:26px;top:611px;width:7px;height:1px;background:transparent;border-top:1px dotted #a0a0a0;"></div>
<svg style="left:32px;top:603px" width="16" height="16" viewBox="0 0 16 16"><path d="M1.3 0.7 L10.3 0.7 L13.8 2.2 L13.8 13.4 L12.2 14.9 L1.3 14.9 Z" fill="url(#fg1)" stroke="#e3b63c" stroke-width="0.8"/><path d="M10.3 1 L10.3 14.6" stroke="#e6c250" stroke-width="0.6"/><path d="M10.6 1.4 L13.4 2.6 L13.4 13.2 L12 14.5 L10.6 14.5 Z" fill="#eacb58"/><path d="M12.8 6.5 L12.8 12" stroke="#f8ecb4" stroke-width="0.9"/><circle cx="12.7" cy="11.9" r="0.95" fill="#2fa0b4"/><polygon points="12.90,0.30 13.63,2.04 15.37,1.33 14.66,3.07 16.40,3.80 14.66,4.53 15.37,6.27 13.63,5.56 12.90,7.30 12.17,5.56 10.43,6.27 11.14,4.53 9.40,3.80 11.14,3.07 10.43,1.33 12.17,2.04" fill="#f6a623" stroke="#f9c04a" stroke-width="0.4"/><circle cx="12.9" cy="3.8" r="1.7" fill="#ffd95a"/><circle cx="12.9" cy="3.8" r="0.9" fill="#fff6c8"/></svg>
<div style="left:37px;top:622px;width:9px;height:9px;background:#fff;border:1px solid #919191;"></div>
<div style="left:39px;top:626px;width:5px;height:1px;background:#000;"></div>
<div style="left:41px;top:624px;width:1px;height:5px;background:#000;"></div>
<div style="left:47px;top:626px;width:7px;height:1px;background:transparent;border-top:1px dotted #a0a0a0;"></div>
<svg style="left:53px;top:618px" width="16" height="16" viewBox="0 0 16 16"><path d="M0.6 1.2 L10.8 1.2 L13.8 2.6 L13.8 13.4 L12.4 15 L0.6 15 Z" fill="url(#fg1)" stroke="#e0b740" stroke-width="0.8"/><path d="M11 1.8 L11 14.6" stroke="#e2bc48" stroke-width="0.8"/><rect x="6.4" y="3" width="8.4" height="8.2" rx="0.8" fill="#f4f6fb" stroke="#bcc6da" stroke-width="0.8"/><rect x="8" y="4.4" width="2" height="2" fill="#4c7bff"/><rect x="11" y="4.4" width="2" height="2" fill="#4c7bff"/><rect x="8" y="7.6" width="2" height="2" fill="#4c7bff"/><rect x="11" y="7.6" width="2" height="2" fill="#4c7bff"/></svg>
<div style="left:37px;top:638px;width:9px;height:9px;background:#fff;border:1px solid #919191;"></div>
<div style="left:39px;top:642px;width:5px;height:1px;background:#000;"></div>
<div style="left:41px;top:640px;width:1px;height:5px;background:#000;"></div>
<div style="left:47px;top:642px;width:7px;height:1px;background:transparent;border-top:1px dotted #a0a0a0;"></div>
<svg style="left:53px;top:634px" width="16" height="16" viewBox="0 0 16 16"><path d="M0.6 1.2 L10.8 1.2 L13.8 2.6 L13.8 13.4 L12.4 15 L0.6 15 Z" fill="url(#fg1)" stroke="#e0b740" stroke-width="0.8"/><path d="M11 1.8 L11 14.6" stroke="#e2bc48" stroke-width="0.8"/><rect x="6.4" y="3" width="8.4" height="8.2" rx="0.8" fill="#f4f6fb" stroke="#bcc6da" stroke-width="0.8"/><rect x="8" y="4.4" width="2" height="2" fill="#4c7bff"/><rect x="11" y="4.4" width="2" height="2" fill="#4c7bff"/><rect x="8" y="7.6" width="2" height="2" fill="#4c7bff"/><rect x="11" y="7.6" width="2" height="2" fill="#4c7bff"/></svg>
<div style="left:16px;top:653px;width:9px;height:9px;background:#fff;border:1px solid #919191;"></div>
<div style="left:18px;top:657px;width:5px;height:1px;background:#000;"></div>
<div style="left:26px;top:657px;width:7px;height:1px;background:transparent;border-top:1px dotted #a0a0a0;"></div>
<svg style="left:32px;top:649px" width="16" height="16" viewBox="0 0 16 16"><path d="M1.3 0.7 L10.3 0.7 L13.8 2.2 L13.8 13.4 L12.2 14.9 L1.3 14.9 Z" fill="url(#fg1)" stroke="#e3b63c" stroke-width="0.8"/><path d="M10.3 1 L10.3 14.6" stroke="#e6c250" stroke-width="0.6"/><path d="M10.6 1.4 L13.4 2.6 L13.4 13.2 L12 14.5 L10.6 14.5 Z" fill="#eacb58"/><path d="M12.8 6.5 L12.8 12" stroke="#f8ecb4" stroke-width="0.9"/><circle cx="12.7" cy="11.9" r="0.95" fill="#2fa0b4"/><polygon points="12.90,0.30 13.63,2.04 15.37,1.33 14.66,3.07 16.40,3.80 14.66,4.53 15.37,6.27 13.63,5.56 12.90,7.30 12.17,5.56 10.43,6.27 11.14,4.53 9.40,3.80 11.14,3.07 10.43,1.33 12.17,2.04" fill="#f6a623" stroke="#f9c04a" stroke-width="0.4"/><circle cx="12.9" cy="3.8" r="1.7" fill="#ffd95a"/><circle cx="12.9" cy="3.8" r="0.9" fill="#fff6c8"/></svg>
<div style="left:53px;top:665px;width:16px;height:3px;overflow:hidden"><svg style="left:0;top:0" width="16" height="16" viewBox="0 0 16 16"><path d="M0.6 1.2 L10.8 1.2 L13.8 2.6 L13.8 13.4 L12.4 15 L0.6 15 Z" fill="url(#fg1)" stroke="#e0b740" stroke-width="0.8"/></svg></div>
<svg style="left:0;top:0" width="960" height="719"><rect x="58.25" y="509" width="290.5" height="18" fill="none" stroke="#ee1c24" stroke-width="2.6"/></svg>
<div style="left:397px;top:76px;width:552px;height:609px;background:#fff;border:1px solid #8e8e8e;border-right-color:#fff;border-bottom-color:#fff;"></div>
<div style="left:398px;top:77px;width:550px;height:607px;background:#fff;border:1px solid #696969;border-right-color:#e3e3e3;border-bottom-color:#e3e3e3;"></div>
<div style="left:933px;top:78px;width:15px;height:606px;background:#f0f0f0;"></div>
<div style="left:933px;top:94px;width:15px;height:212px;background:#cdcdcd;"></div>
<svg style="left:936px;top:83px" width="8" height="6" viewBox="0 0 8 6"><path d="M0.5 5 L4 1.5 L7.5 5" stroke="#404040" stroke-width="1.6" fill="none"/></svg>
<svg style="left:936px;top:673px" width="8" height="6" viewBox="0 0 8 6"><path d="M0.5 1.5 L4 5 L7.5 1.5" stroke="#404040" stroke-width="1.6" fill="none"/></svg>
<div style="left:401px;top:79px;width:424px;height:20px;background:#9b9b9b;"></div>
<div style="left:828px;top:79px;width:31px;height:20px;background:#9b9b9b;"></div>
<div style="left:862px;top:79px;width:30px;height:20px;background:#9b9b9b;"></div>
<div style="left:895px;top:79px;width:31px;height:20px;background:#9b9b9b;"></div>
<svg style="left:407px;top:84px" width="12" height="10" viewBox="0 0 12 10"><path d="M0.4 0.4 L5.8 5.2 L11.2 0.4 M0.4 4.6 L5.8 9.4 L11.2 4.6" stroke="#fff" stroke-width="1.3" fill="none"/></svg>
<div style="left:401px;top:412px;width:424px;height:20px;background:#9b9b9b;"></div>
<div style="left:828px;top:412px;width:31px;height:20px;background:#9b9b9b;"></div>
<div style="left:862px;top:412px;width:30px;height:20px;background:#9b9b9b;"></div>
<div style="left:895px;top:412px;width:31px;height:20px;background:#9b9b9b;"></div>
<svg style="left:407px;top:417px" width="12" height="10" viewBox="0 0 12 10"><path d="M0.4 0.4 L5.8 5.2 L11.2 0.4 M0.4 4.6 L5.8 9.4 L11.2 4.6" stroke="#fff" stroke-width="1.3" fill="none"/></svg>
<div style="left:410px;top:112px;width:6px;height:6px;background:#e2e2e8;border:1px solid #c9c9d2;"></div>
<div style="left:410px;top:132px;width:6px;height:6px;background:#e2e2e8;border:1px solid #c9c9d2;"></div>
<div style="left:410px;top:157px;width:6px;height:6px;background:#e2e2e8;border:1px solid #c9c9d2;"></div>
<div style="left:410px;top:181px;width:6px;height:6px;background:#e2e2e8;border:1px solid #c9c9d2;"></div>
<div style="left:410px;top:324px;width:6px;height:6px;background:#e2e2e8;border:1px solid #c9c9d2;"></div>
<svg style="left:0;top:0" width="960" height="719"><rect x="401" y="435.00" width="424" height="22.60" fill="#e1e1e1"/><rect x="828" y="435.00" width="30.7" height="22.60" fill="#e1e1e1"/><rect x="861.7" y="435.00" width="30.4" height="22.60" fill="#e1e1e1"/><rect x="895.3" y="435.00" width="30.7" height="22.60" fill="#e1e1e1"/></svg>
<svg style="left:406px;top:438.2px" width="15" height="15" viewBox="0 0 15 15"><path d="M1 0.9 L9 0.9 L12 3.9 L12 14.4 L1 14.4 Z" fill="#eaf2ff" stroke="#b7cff3" stroke-width="0.9"/><path d="M1 14.4 H12" stroke="#6f93dc" stroke-width="0.9"/><path d="M9 0.9 L12 3.9 L9 3.9 Z" fill="#3f80e0"/><rect x="4.9" y="6.1" width="9.2" height="6.8" rx="0.9" fill="#fff" stroke="#3d6fd0" stroke-width="1.3"/><rect x="6.1" y="7.6" width="2" height="2.1" fill="#ffc83a"/><rect x="8.5" y="7.6" width="2" height="2.1" fill="#6ab0f5"/><rect x="10.9" y="7.6" width="2" height="2.1" fill="#f58aa0"/></svg>
<svg style="left:837px;top:438.9px" width="15.2" height="15.2" viewBox="0 0 16 16"><path d="M4.2 0.8 L12.2 0.8 L15.4 4 L15.4 14 Q15.4 15.2 14.2 15.2 L4.2 15.2 Q3 15.2 3 14 L3 2 Q3 0.8 4.2 0.8 Z" fill="#fdfdfd" stroke="#8c8c8c" stroke-width="1"/><path d="M12.2 0.8 L12.2 4 L15.4 4" fill="#eee" stroke="#9a9a9a" stroke-width="0.7"/><rect x="0.4" y="3" width="10.4" height="10" rx="0.8" fill="#7fa3ee"/><rect x="1.6" y="4.2" width="8" height="7.6" fill="#3a64c8"/><path d="M2.6 5.4 L4 10.6 L5.6 6.6 L7.2 10.6 L8.6 5.4" stroke="#e4ecff" stroke-width="1.3" fill="none"/></svg>
<svg style="left:872px;top:438.5px" width="14" height="16" viewBox="0 0 14 16"><path d="M2 0.7 L8.6 0.7 L13.3 5.2 L13.3 13.8 Q13.3 15.1 12 15.1 L2 15.1 Q0.7 15.1 0.7 13.8 L0.7 2 Q0.7 0.7 2 0.7 Z" fill="#fafafa" stroke="#7a7a7a" stroke-width="1.05"/><path d="M1.6 15.1 H12.4" stroke="#7a7a7a" stroke-width="0.9"/><path d="M8.6 0.9 L8.6 5.2 L13.1 5.2" fill="#eee" stroke="#7a7a7a" stroke-width="0.6"/><path d="M3.2 4.8 H8 M3.2 6.5 H10.8 M3.2 8.2 H10.8 M3.2 9.9 H10.8 M3.2 11.6 H10.8 M3.2 13.1 H10.8" stroke="#b4b4b4" stroke-width="1.05"/></svg>
<svg style="left:906px;top:438.5px" width="15" height="15" viewBox="0 0 15 15"><path d="M1.5 1.8 L9 1.8 L12.3 5 L12.3 14.3 L1.5 14.3 Z" fill="#ececf7" stroke="#9c9fcc" stroke-width="1"/><path d="M2.4 6.2 H8 M2.4 9 H11.6 M2.4 11.6 H11.6 M5.2 6.2 V13.8 M8.6 9 V13.8" stroke="#b5b7da" stroke-width="0.9"/><path d="M5.2 12 L6.2 9.4 L11.2 4 L13 5.6 L8 11 Z" fill="#52b94a" stroke="#2f8d2d" stroke-width="0.6"/><path d="M5.2 12 L5.8 10.5 L6.8 11.4 Z" fill="#444"/><path d="M11.2 4 L12.4 2.7 L14.2 4.3 L13 5.6 Z" fill="#e79238"/></svg>
<svg style="left:0;top:0" width="960" height="719"><rect x="401" y="461.20" width="424" height="22.60" fill="#e1e1e1"/><rect x="828" y="461.20" width="30.7" height="22.60" fill="#e1e1e1"/><rect x="861.7" y="461.20" width="30.4" height="22.60" fill="#e1e1e1"/><rect x="895.3" y="461.20" width="30.7" height="22.60" fill="#e1e1e1"/></svg>
<svg style="left:406px;top:464.4px" width="15" height="15" viewBox="0 0 15 15"><path d="M1 0.9 L9 0.9 L12 3.9 L12 14.4 L1 14.4 Z" fill="#eaf2ff" stroke="#b7cff3" stroke-width="0.9"/><path d="M1 14.4 H12" stroke="#6f93dc" stroke-width="0.9"/><path d="M9 0.9 L12 3.9 L9 3.9 Z" fill="#3f80e0"/><rect x="4.9" y="6.1" width="9.2" height="6.8" rx="0.9" fill="#fff" stroke="#3d6fd0" stroke-width="1.3"/><rect x="6.1" y="7.6" width="2" height="2.1" fill="#ffc83a"/><rect x="8.5" y="7.6" width="2" height="2.1" fill="#6ab0f5"/><rect x="10.9" y="7.6" width="2" height="2.1" fill="#f58aa0"/></svg>
<svg style="left:837px;top:465.1px" width="15.2" height="15.2" viewBox="0 0 16 16"><path d="M4.2 0.8 L12.2 0.8 L15.4 4 L15.4 14 Q15.4 15.2 14.2 15.2 L4.2 15.2 Q3 15.2 3 14 L3 2 Q3 0.8 4.2 0.8 Z" fill="#fdfdfd" stroke="#8c8c8c" stroke-width="1"/><path d="M12.2 0.8 L12.2 4 L15.4 4" fill="#eee" stroke="#9a9a9a" stroke-width="0.7"/><rect x="0.4" y="3" width="10.4" height="10" rx="0.8" fill="#7fa3ee"/><rect x="1.6" y="4.2" width="8" height="7.6" fill="#3a64c8"/><path d="M2.6 5.4 L4 10.6 L5.6 6.6 L7.2 10.6 L8.6 5.4" stroke="#e4ecff" stroke-width="1.3" fill="none"/></svg>
<svg style="left:872px;top:464.7px" width="14" height="16" viewBox="0 0 14 16"><path d="M2 0.7 L8.6 0.7 L13.3 5.2 L13.3 13.8 Q13.3 15.1 12 15.1 L2 15.1 Q0.7 15.1 0.7 13.8 L0.7 2 Q0.7 0.7 2 0.7 Z" fill="#fafafa" stroke="#7a7a7a" stroke-width="1.05"/><path d="M1.6 15.1 H12.4" stroke="#7a7a7a" stroke-width="0.9"/><path d="M8.6 0.9 L8.6 5.2 L13.1 5.2" fill="#eee" stroke="#7a7a7a" stroke-width="0.6"/><path d="M3.2 4.8 H8 M3.2 6.5 H10.8 M3.2 8.2 H10.8 M3.2 9.9 H10.8 M3.2 11.6 H10.8 M3.2 13.1 H10.8" stroke="#b4b4b4" stroke-width="1.05"/></svg>
<svg style="left:906px;top:464.7px" width="15" height="15" viewBox="0 0 15 15"><path d="M1.5 1.8 L9 1.8 L12.3 5 L12.3 14.3 L1.5 14.3 Z" fill="#ececf7" stroke="#9c9fcc" stroke-width="1"/><path d="M2.4 6.2 H8 M2.4 9 H11.6 M2.4 11.6 H11.6 M5.2 6.2 V13.8 M8.6 9 V13.8" stroke="#b5b7da" stroke-width="0.9"/><path d="M5.2 12 L6.2 9.4 L11.2 4 L13 5.6 L8 11 Z" fill="#52b94a" stroke="#2f8d2d" stroke-width="0.6"/><path d="M5.2 12 L5.8 10.5 L6.8 11.4 Z" fill="#444"/><path d="M11.2 4 L12.4 2.7 L14.2 4.3 L13 5.6 Z" fill="#e79238"/></svg>
<svg style="left:0;top:0" width="960" height="719"><rect x="401" y="487.40" width="424" height="31.30" fill="#e1e1e1"/><rect x="828" y="487.40" width="30.7" height="31.30" fill="#e1e1e1"/><rect x="861.7" y="487.40" width="30.4" height="31.30" fill="#e1e1e1"/><rect x="895.3" y="487.40" width="30.7" height="31.30" fill="#e1e1e1"/></svg>
<svg style="left:406px;top:494.9px" width="15" height="15" viewBox="0 0 15 15"><path d="M1 0.9 L9 0.9 L12 3.9 L12 14.4 L1 14.4 Z" fill="#eaf2ff" stroke="#b7cff3" stroke-width="0.9"/><path d="M1 14.4 H12" stroke="#6f93dc" stroke-width="0.9"/><path d="M9 0.9 L12 3.9 L9 3.9 Z" fill="#3f80e0"/><rect x="4.9" y="6.1" width="9.2" height="6.8" rx="0.9" fill="#fff" stroke="#3d6fd0" stroke-width="1.3"/><rect x="6.1" y="7.6" width="2" height="2.1" fill="#ffc83a"/><rect x="8.5" y="7.6" width="2" height="2.1" fill="#6ab0f5"/><rect x="10.9" y="7.6" width="2" height="2.1" fill="#f58aa0"/></svg>
<svg style="left:837px;top:495.6px" width="15.2" height="15.2" viewBox="0 0 16 16"><path d="M4.2 0.8 L12.2 0.8 L15.4 4 L15.4 14 Q15.4 15.2 14.2 15.2 L4.2 15.2 Q3 15.2 3 14 L3 2 Q3 0.8 4.2 0.8 Z" fill="#fdfdfd" stroke="#8c8c8c" stroke-width="1"/><path d="M12.2 0.8 L12.2 4 L15.4 4" fill="#eee" stroke="#9a9a9a" stroke-width="0.7"/><rect x="0.4" y="3" width="10.4" height="10" rx="0.8" fill="#7fa3ee"/><rect x="1.6" y="4.2" width="8" height="7.6" fill="#3a64c8"/><path d="M2.6 5.4 L4 10.6 L5.6 6.6 L7.2 10.6 L8.6 5.4" stroke="#e4ecff" stroke-width="1.3" fill="none"/></svg>
<svg style="left:872px;top:495.2px" width="14" height="16" viewBox="0 0 14 16"><path d="M2 0.7 L8.6 0.7 L13.3 5.2 L13.3 13.8 Q13.3 15.1 12 15.1 L2 15.1 Q0.7 15.1 0.7 13.8 L0.7 2 Q0.7 0.7 2 0.7 Z" fill="#fafafa" stroke="#7a7a7a" stroke-width="1.05"/><path d="M1.6 15.1 H12.4" stroke="#7a7a7a" stroke-width="0.9"/><path d="M8.6 0.9 L8.6 5.2 L13.1 5.2" fill="#eee" stroke="#7a7a7a" stroke-width="0.6"/><path d="M3.2 4.8 H8 M3.2 6.5 H10.8 M3.2 8.2 H10.8 M3.2 9.9 H10.8 M3.2 11.6 H10.8 M3.2 13.1 H10.8" stroke="#b4b4b4" stroke-width="1.05"/></svg>
<svg style="left:906px;top:495.2px" width="15" height="15" viewBox="0 0 15 15"><path d="M1.5 1.8 L9 1.8 L12.3 5 L12.3 14.3 L1.5 14.3 Z" fill="#ececf7" stroke="#9c9fcc" stroke-width="1"/><path d="M2.4 6.2 H8 M2.4 9 H11.6 M2.4 11.6 H11.6 M5.2 6.2 V13.8 M8.6 9 V13.8" stroke="#b5b7da" stroke-width="0.9"/><path d="M5.2 12 L6.2 9.4 L11.2 4 L13 5.6 L8 11 Z" fill="#52b94a" stroke="#2f8d2d" stroke-width="0.6"/><path d="M5.2 12 L5.8 10.5 L6.8 11.4 Z" fill="#444"/><path d="M11.2 4 L12.4 2.7 L14.2 4.3 L13 5.6 Z" fill="#e79238"/></svg>
<svg style="left:0;top:0" width="960" height="719"><rect x="401" y="522.30" width="424" height="22.60" fill="#e1e1e1"/><rect x="828" y="522.30" width="30.7" height="22.60" fill="#e1e1e1"/><rect x="861.7" y="522.30" width="30.4" height="22.60" fill="#e1e1e1"/><rect x="895.3" y="522.30" width="30.7" height="22.60" fill="#e1e1e1"/></svg>
<svg style="left:406px;top:525.5px" width="15" height="15" viewBox="0 0 15 15"><path d="M1 0.9 L9 0.9 L12 3.9 L12 14.4 L1 14.4 Z" fill="#eaf2ff" stroke="#b7cff3" stroke-width="0.9"/><path d="M1 14.4 H12" stroke="#6f93dc" stroke-width="0.9"/><path d="M9 0.9 L12 3.9 L9 3.9 Z" fill="#3f80e0"/><rect x="4.9" y="6.1" width="9.2" height="6.8" rx="0.9" fill="#fff" stroke="#3d6fd0" stroke-width="1.3"/><rect x="6.1" y="7.6" width="2" height="2.1" fill="#ffc83a"/><rect x="8.5" y="7.6" width="2" height="2.1" fill="#6ab0f5"/><rect x="10.9" y="7.6" width="2" height="2.1" fill="#f58aa0"/></svg>
<svg style="left:837px;top:526.2px" width="15.2" height="15.2" viewBox="0 0 16 16"><path d="M4.2 0.8 L12.2 0.8 L15.4 4 L15.4 14 Q15.4 15.2 14.2 15.2 L4.2 15.2 Q3 15.2 3 14 L3 2 Q3 0.8 4.2 0.8 Z" fill="#fdfdfd" stroke="#8c8c8c" stroke-width="1"/><path d="M12.2 0.8 L12.2 4 L15.4 4" fill="#eee" stroke="#9a9a9a" stroke-width="0.7"/><rect x="0.4" y="3" width="10.4" height="10" rx="0.8" fill="#7fa3ee"/><rect x="1.6" y="4.2" width="8" height="7.6" fill="#3a64c8"/><path d="M2.6 5.4 L4 10.6 L5.6 6.6 L7.2 10.6 L8.6 5.4" stroke="#e4ecff" stroke-width="1.3" fill="none"/></svg>
<svg style="left:872px;top:525.8px" width="14" height="16" viewBox="0 0 14 16"><path d="M2 0.7 L8.6 0.7 L13.3 5.2 L13.3 13.8 Q13.3 15.1 12 15.1 L2 15.1 Q0.7 15.1 0.7 13.8 L0.7 2 Q0.7 0.7 2 0.7 Z" fill="#fafafa" stroke="#7a7a7a" stroke-width="1.05"/><path d="M1.6 15.1 H12.4" stroke="#7a7a7a" stroke-width="0.9"/><path d="M8.6 0.9 L8.6 5.2 L13.1 5.2" fill="#eee" stroke="#7a7a7a" stroke-width="0.6"/><path d="M3.2 4.8 H8 M3.2 6.5 H10.8 M3.2 8.2 H10.8 M3.2 9.9 H10.8 M3.2 11.6 H10.8 M3.2 13.1 H10.8" stroke="#b4b4b4" stroke-width="1.05"/></svg>
<svg style="left:906px;top:525.8px" width="15" height="15" viewBox="0 0 15 15"><path d="M1.5 1.8 L9 1.8 L12.3 5 L12.3 14.3 L1.5 14.3 Z" fill="#ececf7" stroke="#9c9fcc" stroke-width="1"/><path d="M2.4 6.2 H8 M2.4 9 H11.6 M2.4 11.6 H11.6 M5.2 6.2 V13.8 M8.6 9 V13.8" stroke="#b5b7da" stroke-width="0.9"/><path d="M5.2 12 L6.2 9.4 L11.2 4 L13 5.6 L8 11 Z" fill="#52b94a" stroke="#2f8d2d" stroke-width="0.6"/><path d="M5.2 12 L5.8 10.5 L6.8 11.4 Z" fill="#444"/><path d="M11.2 4 L12.4 2.7 L14.2 4.3 L13 5.6 Z" fill="#e79238"/></svg>
<svg style="left:0;top:0" width="960" height="719"><rect x="401" y="548.50" width="424" height="22.60" fill="#e1e1e1"/><rect x="828" y="548.50" width="30.7" height="22.60" fill="#e1e1e1"/><rect x="861.7" y="548.50" width="30.4" height="22.60" fill="#e1e1e1"/><rect x="895.3" y="548.50" width="30.7" height="22.60" fill="#e1e1e1"/></svg>
<svg style="left:406px;top:551.7px" width="15" height="15" viewBox="0 0 15 15"><path d="M1 0.9 L9 0.9 L12 3.9 L12 14.4 L1 14.4 Z" fill="#eaf2ff" stroke="#b7cff3" stroke-width="0.9"/><path d="M1 14.4 H12" stroke="#6f93dc" stroke-width="0.9"/><path d="M9 0.9 L12 3.9 L9 3.9 Z" fill="#3f80e0"/><rect x="4.9" y="6.1" width="9.2" height="6.8" rx="0.9" fill="#fff" stroke="#3d6fd0" stroke-width="1.3"/><rect x="6.1" y="7.6" width="2" height="2.1" fill="#ffc83a"/><rect x="8.5" y="7.6" width="2" height="2.1" fill="#6ab0f5"/><rect x="10.9" y="7.6" width="2" height="2.1" fill="#f58aa0"/></svg>
<svg style="left:837px;top:552.4px" width="15.2" height="15.2" viewBox="0 0 16 16"><path d="M4.2 0.8 L12.2 0.8 L15.4 4 L15.4 14 Q15.4 15.2 14.2 15.2 L4.2 15.2 Q3 15.2 3 14 L3 2 Q3 0.8 4.2 0.8 Z" fill="#fdfdfd" stroke="#8c8c8c" stroke-width="1"/><path d="M12.2 0.8 L12.2 4 L15.4 4" fill="#eee" stroke="#9a9a9a" stroke-width="0.7"/><rect x="0.4" y="3" width="10.4" height="10" rx="0.8" fill="#7fa3ee"/><rect x="1.6" y="4.2" width="8" height="7.6" fill="#3a64c8"/><path d="M2.6 5.4 L4 10.6 L5.6 6.6 L7.2 10.6 L8.6 5.4" stroke="#e4ecff" stroke-width="1.3" fill="none"/></svg>
<svg style="left:872px;top:552.0px" width="14" height="16" viewBox="0 0 14 16"><path d="M2 0.7 L8.6 0.7 L13.3 5.2 L13.3 13.8 Q13.3 15.1 12 15.1 L2 15.1 Q0.7 15.1 0.7 13.8 L0.7 2 Q0.7 0.7 2 0.7 Z" fill="#fafafa" stroke="#7a7a7a" stroke-width="1.05"/><path d="M1.6 15.1 H12.4" stroke="#7a7a7a" stroke-width="0.9"/><path d="M8.6 0.9 L8.6 5.2 L13.1 5.2" fill="#eee" stroke="#7a7a7a" stroke-width="0.6"/><path d="M3.2 4.8 H8 M3.2 6.5 H10.8 M3.2 8.2 H10.8 M3.2 9.9 H10.8 M3.2 11.6 H10.8 M3.2 13.1 H10.8" stroke="#b4b4b4" stroke-width="1.05"/></svg>
<svg style="left:906px;top:552.0px" width="15" height="15" viewBox="0 0 15 15"><path d="M1.5 1.8 L9 1.8 L12.3 5 L12.3 14.3 L1.5 14.3 Z" fill="#ececf7" stroke="#9c9fcc" stroke-width="1"/><path d="M2.4 6.2 H8 M2.4 9 H11.6 M2.4 11.6 H11.6 M5.2 6.2 V13.8 M8.6 9 V13.8" stroke="#b5b7da" stroke-width="0.9"/><path d="M5.2 12 L6.2 9.4 L11.2 4 L13 5.6 L8 11 Z" fill="#52b94a" stroke="#2f8d2d" stroke-width="0.6"/><path d="M5.2 12 L5.8 10.5 L6.8 11.4 Z" fill="#444"/><path d="M11.2 4 L12.4 2.7 L14.2 4.3 L13 5.6 Z" fill="#e79238"/></svg>
<svg style="left:0;top:0" width="960" height="719"><rect x="401" y="574.70" width="424" height="22.60" fill="#0870d6"/><rect x="828" y="574.70" width="30.7" height="22.60" fill="#0870d6"/><rect x="861.7" y="574.70" width="30.4" height="22.60" fill="#0870d6"/><rect x="895.3" y="574.70" width="30.7" height="22.60" fill="#0870d6"/></svg>
<svg style="left:406px;top:577.9px" width="15" height="15" viewBox="0 0 15 15"><path d="M1 0.9 L9 0.9 L12 3.9 L12 14.4 L1 14.4 Z" fill="#eef4ff" stroke="#dfe9fb" stroke-width="0.9"/><path d="M1 14.4 H12" stroke="#6f93dc" stroke-width="0.9"/><path d="M9 0.9 L12 3.9 L9 3.9 Z" fill="#3f80e0"/><rect x="4.9" y="6.1" width="9.2" height="6.8" rx="0.9" fill="#fff" stroke="#3d6fd0" stroke-width="1.3"/><rect x="6.1" y="7.6" width="2" height="2.1" fill="#ffc83a"/><rect x="8.5" y="7.6" width="2" height="2.1" fill="#6ab0f5"/><rect x="10.9" y="7.6" width="2" height="2.1" fill="#f58aa0"/></svg>
<svg style="left:837px;top:578.6px" width="15.2" height="15.2" viewBox="0 0 16 16"><path d="M4.2 0.8 L12.2 0.8 L15.4 4 L15.4 14 Q15.4 15.2 14.2 15.2 L4.2 15.2 Q3 15.2 3 14 L3 2 Q3 0.8 4.2 0.8 Z" fill="#fdfdfd" stroke="#8c8c8c" stroke-width="1"/><path d="M12.2 0.8 L12.2 4 L15.4 4" fill="#eee" stroke="#9a9a9a" stroke-width="0.7"/><rect x="0.4" y="3" width="10.4" height="10" rx="0.8" fill="#7fa3ee"/><rect x="1.6" y="4.2" width="8" height="7.6" fill="#3a64c8"/><path d="M2.6 5.4 L4 10.6 L5.6 6.6 L7.2 10.6 L8.6 5.4" stroke="#e4ecff" stroke-width="1.3" fill="none"/></svg>
<svg style="left:872px;top:578.2px" width="14" height="16" viewBox="0 0 14 16"><path d="M2 0.7 L8.6 0.7 L13.3 5.2 L13.3 13.8 Q13.3 15.1 12 15.1 L2 15.1 Q0.7 15.1 0.7 13.8 L0.7 2 Q0.7 0.7 2 0.7 Z" fill="#fafafa" stroke="#4a4a4a" stroke-width="1.05"/><path d="M1.6 15.1 H12.4" stroke="#4a4a4a" stroke-width="0.9"/><path d="M8.6 0.9 L8.6 5.2 L13.1 5.2" fill="#eee" stroke="#4a4a4a" stroke-width="0.6"/><path d="M3.2 4.8 H8 M3.2 6.5 H10.8 M3.2 8.2 H10.8 M3.2 9.9 H10.8 M3.2 11.6 H10.8 M3.2 13.1 H10.8" stroke="#b4b4b4" stroke-width="1.05"/></svg>
<svg style="left:906px;top:578.2px" width="15" height="15" viewBox="0 0 15 15"><path d="M1.5 1.8 L9 1.8 L12.3 5 L12.3 14.3 L1.5 14.3 Z" fill="#ececf7" stroke="#9c9fcc" stroke-width="1"/><path d="M2.4 6.2 H8 M2.4 9 H11.6 M2.4 11.6 H11.6 M5.2 6.2 V13.8 M8.6 9 V13.8" stroke="#b5b7da" stroke-width="0.9"/><path d="M5.2 12 L6.2 9.4 L11.2 4 L13 5.6 L8 11 Z" fill="#52b94a" stroke="#2f8d2d" stroke-width="0.6"/><path d="M5.2 12 L5.8 10.5 L6.8 11.4 Z" fill="#444"/><path d="M11.2 4 L12.4 2.7 L14.2 4.3 L13 5.6 Z" fill="#e79238"/></svg>
<svg style="left:0;top:0" width="960" height="719"><rect x="401" y="600.90" width="424" height="22.60" fill="#e1e1e1"/><rect x="828" y="600.90" width="30.7" height="22.60" fill="#e1e1e1"/><rect x="861.7" y="600.90" width="30.4" height="22.60" fill="#e1e1e1"/><rect x="895.3" y="600.90" width="30.7" height="22.60" fill="#e1e1e1"/></svg>
<svg style="left:406px;top:604.1px" width="15" height="15" viewBox="0 0 15 15"><path d="M1 0.9 L9 0.9 L12 3.9 L12 14.4 L1 14.4 Z" fill="#eaf2ff" stroke="#b7cff3" stroke-width="0.9"/><path d="M1 14.4 H12" stroke="#6f93dc" stroke-width="0.9"/><path d="M9 0.9 L12 3.9 L9 3.9 Z" fill="#3f80e0"/><rect x="4.9" y="6.1" width="9.2" height="6.8" rx="0.9" fill="#fff" stroke="#3d6fd0" stroke-width="1.3"/><rect x="6.1" y="7.6" width="2" height="2.1" fill="#ffc83a"/><rect x="8.5" y="7.6" width="2" height="2.1" fill="#6ab0f5"/><rect x="10.9" y="7.6" width="2" height="2.1" fill="#f58aa0"/></svg>
<svg style="left:837px;top:604.8px" width="15.2" height="15.2" viewBox="0 0 16 16"><path d="M4.2 0.8 L12.2 0.8 L15.4 4 L15.4 14 Q15.4 15.2 14.2 15.2 L4.2 15.2 Q3 15.2 3 14 L3 2 Q3 0.8 4.2 0.8 Z" fill="#fdfdfd" stroke="#8c8c8c" stroke-width="1"/><path d="M12.2 0.8 L12.2 4 L15.4 4" fill="#eee" stroke="#9a9a9a" stroke-width="0.7"/><rect x="0.4" y="3" width="10.4" height="10" rx="0.8" fill="#7fa3ee"/><rect x="1.6" y="4.2" width="8" height="7.6" fill="#3a64c8"/><path d="M2.6 5.4 L4 10.6 L5.6 6.6 L7.2 10.6 L8.6 5.4" stroke="#e4ecff" stroke-width="1.3" fill="none"/></svg>
<svg style="left:872px;top:604.4px" width="14" height="16" viewBox="0 0 14 16"><path d="M2 0.7 L8.6 0.7 L13.3 5.2 L13.3 13.8 Q13.3 15.1 12 15.1 L2 15.1 Q0.7 15.1 0.7 13.8 L0.7 2 Q0.7 0.7 2 0.7 Z" fill="#fafafa" stroke="#7a7a7a" stroke-width="1.05"/><path d="M1.6 15.1 H12.4" stroke="#7a7a7a" stroke-width="0.9"/><path d="M8.6 0.9 L8.6 5.2 L13.1 5.2" fill="#eee" stroke="#7a7a7a" stroke-width="0.6"/><path d="M3.2 4.8 H8 M3.2 6.5 H10.8 M3.2 8.2 H10.8 M3.2 9.9 H10.8 M3.2 11.6 H10.8 M3.2 13.1 H10.8" stroke="#b4b4b4" stroke-width="1.05"/></svg>
<svg style="left:906px;top:604.4px" width="15" height="15" viewBox="0 0 15 15"><path d="M1.5 1.8 L9 1.8 L12.3 5 L12.3 14.3 L1.5 14.3 Z" fill="#ececf7" stroke="#9c9fcc" stroke-width="1"/><path d="M2.4 6.2 H8 M2.4 9 H11.6 M2.4 11.6 H11.6 M5.2 6.2 V13.8 M8.6 9 V13.8" stroke="#b5b7da" stroke-width="0.9"/><path d="M5.2 12 L6.2 9.4 L11.2 4 L13 5.6 L8 11 Z" fill="#52b94a" stroke="#2f8d2d" stroke-width="0.6"/><path d="M5.2 12 L5.8 10.5 L6.8 11.4 Z" fill="#444"/><path d="M11.2 4 L12.4 2.7 L14.2 4.3 L13 5.6 Z" fill="#e79238"/></svg>
<svg style="left:0;top:0" width="960" height="719"><rect x="401" y="627.00" width="424" height="22.60" fill="#e1e1e1"/><rect x="828" y="627.00" width="30.7" height="22.60" fill="#e1e1e1"/><rect x="861.7" y="627.00" width="30.4" height="22.60" fill="#e1e1e1"/><rect x="895.3" y="627.00" width="30.7" height="22.60" fill="#e1e1e1"/></svg>
<svg style="left:406px;top:630.2px" width="15" height="15" viewBox="0 0 15 15"><path d="M1 0.9 L9 0.9 L12 3.9 L12 14.4 L1 14.4 Z" fill="#eaf2ff" stroke="#b7cff3" stroke-width="0.9"/><path d="M1 14.4 H12" stroke="#6f93dc" stroke-width="0.9"/><path d="M9 0.9 L12 3.9 L9 3.9 Z" fill="#3f80e0"/><rect x="4.9" y="6.1" width="9.2" height="6.8" rx="0.9" fill="#fff" stroke="#3d6fd0" stroke-width="1.3"/><rect x="6.1" y="7.6" width="2" height="2.1" fill="#ffc83a"/><rect x="8.5" y="7.6" width="2" height="2.1" fill="#6ab0f5"/><rect x="10.9" y="7.6" width="2" height="2.1" fill="#f58aa0"/></svg>
<svg style="left:837px;top:630.9px" width="15.2" height="15.2" viewBox="0 0 16 16"><path d="M4.2 0.8 L12.2 0.8 L15.4 4 L15.4 14 Q15.4 15.2 14.2 15.2 L4.2 15.2 Q3 15.2 3 14 L3 2 Q3 0.8 4.2 0.8 Z" fill="#fdfdfd" stroke="#8c8c8c" stroke-width="1"/><path d="M12.2 0.8 L12.2 4 L15.4 4" fill="#eee" stroke="#9a9a9a" stroke-width="0.7"/><rect x="0.4" y="3" width="10.4" height="10" rx="0.8" fill="#7fa3ee"/><rect x="1.6" y="4.2" width="8" height="7.6" fill="#3a64c8"/><path d="M2.6 5.4 L4 10.6 L5.6 6.6 L7.2 10.6 L8.6 5.4" stroke="#e4ecff" stroke-width="1.3" fill="none"/></svg>
<svg style="left:872px;top:630.5px" width="14" height="16" viewBox="0 0 14 16"><path d="M2 0.7 L8.6 0.7 L13.3 5.2 L13.3 13.8 Q13.3 15.1 12 15.1 L2 15.1 Q0.7 15.1 0.7 13.8 L0.7 2 Q0.7 0.7 2 0.7 Z" fill="#fafafa" stroke="#7a7a7a" stroke-width="1.05"/><path d="M1.6 15.1 H12.4" stroke="#7a7a7a" stroke-width="0.9"/><path d="M8.6 0.9 L8.6 5.2 L13.1 5.2" fill="#eee" stroke="#7a7a7a" stroke-width="0.6"/><path d="M3.2 4.8 H8 M3.2 6.5 H10.8 M3.2 8.2 H10.8 M3.2 9.9 H10.8 M3.2 11.6 H10.8 M3.2 13.1 H10.8" stroke="#b4b4b4" stroke-width="1.05"/></svg>
<svg style="left:906px;top:630.5px" width="15" height="15" viewBox="0 0 15 15"><path d="M1.5 1.8 L9 1.8 L12.3 5 L12.3 14.3 L1.5 14.3 Z" fill="#ececf7" stroke="#9c9fcc" stroke-width="1"/><path d="M2.4 6.2 H8 M2.4 9 H11.6 M2.4 11.6 H11.6 M5.2 6.2 V13.8 M8.6 9 V13.8" stroke="#b5b7da" stroke-width="0.9"/><path d="M5.2 12 L6.2 9.4 L11.2 4 L13 5.6 L8 11 Z" fill="#52b94a" stroke="#2f8d2d" stroke-width="0.6"/><path d="M5.2 12 L5.8 10.5 L6.8 11.4 Z" fill="#444"/><path d="M11.2 4 L12.4 2.7 L14.2 4.3 L13 5.6 Z" fill="#e79238"/></svg>
<svg style="left:0;top:0" width="960" height="719"><rect x="401" y="653.20" width="424" height="22.60" fill="#e1e1e1"/><rect x="828" y="653.20" width="30.7" height="22.60" fill="#e1e1e1"/><rect x="861.7" y="653.20" width="30.4" height="22.60" fill="#e1e1e1"/><rect x="895.3" y="653.20" width="30.7" height="22.60" fill="#e1e1e1"/></svg>
<svg style="left:406px;top:656.4px" width="15" height="15" viewBox="0 0 15 15"><path d="M1 0.9 L9 0.9 L12 3.9 L12 14.4 L1 14.4 Z" fill="#eaf2ff" stroke="#b7cff3" stroke-width="0.9"/><path d="M1 14.4 H12" stroke="#6f93dc" stroke-width="0.9"/><path d="M9 0.9 L12 3.9 L9 3.9 Z" fill="#3f80e0"/><rect x="4.9" y="6.1" width="9.2" height="6.8" rx="0.9" fill="#fff" stroke="#3d6fd0" stroke-width="1.3"/><rect x="6.1" y="7.6" width="2" height="2.1" fill="#ffc83a"/><rect x="8.5" y="7.6" width="2" height="2.1" fill="#6ab0f5"/><rect x="10.9" y="7.6" width="2" height="2.1" fill="#f58aa0"/></svg>
<svg style="left:837px;top:657.1px" width="15.2" height="15.2" viewBox="0 0 16 16"><path d="M4.2 0.8 L12.2 0.8 L15.4 4 L15.4 14 Q15.4 15.2 14.2 15.2 L4.2 15.2 Q3 15.2 3 14 L3 2 Q3 0.8 4.2 0.8 Z" fill="#fdfdfd" stroke="#8c8c8c" stroke-width="1"/><path d="M12.2 0.8 L12.2 4 L15.4 4" fill="#eee" stroke="#9a9a9a" stroke-width="0.7"/><rect x="0.4" y="3" width="10.4" height="10" rx="0.8" fill="#7fa3ee"/><rect x="1.6" y="4.2" width="8" height="7.6" fill="#3a64c8"/><path d="M2.6 5.4 L4 10.6 L5.6 6.6 L7.2 10.6 L8.6 5.4" stroke="#e4ecff" stroke-width="1.3" fill="none"/></svg>
<svg style="left:872px;top:656.7px" width="14" height="16" viewBox="0 0 14 16"><path d="M2 0.7 L8.6 0.7 L13.3 5.2 L13.3 13.8 Q13.3 15.1 12 15.1 L2 15.1 Q0.7 15.1 0.7 13.8 L0.7 2 Q0.7 0.7 2 0.7 Z" fill="#fafafa" stroke="#7a7a7a" stroke-width="1.05"/><path d="M1.6 15.1 H12.4" stroke="#7a7a7a" stroke-width="0.9"/><path d="M8.6 0.9 L8.6 5.2 L13.1 5.2" fill="#eee" stroke="#7a7a7a" stroke-width="0.6"/><path d="M3.2 4.8 H8 M3.2 6.5 H10.8 M3.2 8.2 H10.8 M3.2 9.9 H10.8 M3.2 11.6 H10.8 M3.2 13.1 H10.8" stroke="#b4b4b4" stroke-width="1.05"/></svg>
<svg style="left:906px;top:656.7px" width="15" height="15" viewBox="0 0 15 15"><path d="M1.5 1.8 L9 1.8 L12.3 5 L12.3 14.3 L1.5 14.3 Z" fill="#ececf7" stroke="#9c9fcc" stroke-width="1"/><path d="M2.4 6.2 H8 M2.4 9 H11.6 M2.4 11.6 H11.6 M5.2 6.2 V13.8 M8.6 9 V13.8" stroke="#b5b7da" stroke-width="0.9"/><path d="M5.2 12 L6.2 9.4 L11.2 4 L13 5.6 L8 11 Z" fill="#52b94a" stroke="#2f8d2d" stroke-width="0.6"/><path d="M5.2 12 L5.8 10.5 L6.8 11.4 Z" fill="#444"/><path d="M11.2 4 L12.4 2.7 L14.2 4.3 L13 5.6 Z" fill="#e79238"/></svg>
<svg style="left:0;top:0" width="960" height="719"><rect x="401" y="679.40" width="424" height="4.60" fill="#e1e1e1"/><rect x="828" y="679.40" width="30.7" height="4.60" fill="#e1e1e1"/><rect x="861.7" y="679.40" width="30.4" height="4.60" fill="#e1e1e1"/><rect x="895.3" y="679.40" width="30.7" height="4.60" fill="#e1e1e1"/></svg>
<svg style="left:837px;top:153px" width="15.2" height="15.2" viewBox="0 0 16 16"><path d="M4.2 0.8 L12.2 0.8 L15.4 4 L15.4 14 Q15.4 15.2 14.2 15.2 L4.2 15.2 Q3 15.2 3 14 L3 2 Q3 0.8 4.2 0.8 Z" fill="#fdfdfd" stroke="#8c8c8c" stroke-width="1"/><path d="M12.2 0.8 L12.2 4 L15.4 4" fill="#eee" stroke="#9a9a9a" stroke-width="0.7"/><rect x="0.4" y="3" width="10.4" height="10" rx="0.8" fill="#7fa3ee"/><rect x="1.6" y="4.2" width="8" height="7.6" fill="#3a64c8"/><path d="M2.6 5.4 L4 10.6 L5.6 6.6 L7.2 10.6 L8.6 5.4" stroke="#e4ecff" stroke-width="1.3" fill="none"/></svg>
<svg style="left:872px;top:152.3px" width="14" height="16" viewBox="0 0 14 16"><path d="M2 0.7 L8.6 0.7 L13.3 5.2 L13.3 13.8 Q13.3 15.1 12 15.1 L2 15.1 Q0.7 15.1 0.7 13.8 L0.7 2 Q0.7 0.7 2 0.7 Z" fill="#fafafa" stroke="#7a7a7a" stroke-width="1.05"/><path d="M1.6 15.1 H12.4" stroke="#7a7a7a" stroke-width="0.9"/><path d="M8.6 0.9 L8.6 5.2 L13.1 5.2" fill="#eee" stroke="#7a7a7a" stroke-width="0.6"/><path d="M3.2 4.8 H8 M3.2 6.5 H10.8 M3.2 8.2 H10.8 M3.2 9.9 H10.8 M3.2 11.6 H10.8 M3.2 13.1 H10.8" stroke="#b4b4b4" stroke-width="1.05"/></svg>
<svg style="left:906px;top:151.8px" width="15" height="15" viewBox="0 0 15 15"><path d="M1.5 1.8 L9 1.8 L12.3 5 L12.3 14.3 L1.5 14.3 Z" fill="#ececf7" stroke="#9c9fcc" stroke-width="1"/><path d="M2.4 6.2 H8 M2.4 9 H11.6 M2.4 11.6 H11.6 M5.2 6.2 V13.8 M8.6 9 V13.8" stroke="#b5b7da" stroke-width="0.9"/><path d="M5.2 12 L6.2 9.4 L11.2 4 L13 5.6 L8 11 Z" fill="#52b94a" stroke="#2f8d2d" stroke-width="0.6"/><path d="M5.2 12 L5.8 10.5 L6.8 11.4 Z" fill="#444"/><path d="M11.2 4 L12.4 2.7 L14.2 4.3 L13 5.6 Z" fill="#e79238"/></svg>
<svg style="left:0;top:0" width="960" height="719"><rect x="398.75" y="572.5" width="530" height="27.7" fill="none" stroke="#18a84a" stroke-width="2.4"/></svg>
<div style="left:834px;top:695px;width:122px;height:20px;background:#e1e1e1;border:1px solid #f4f4f4;border-right-color:#adadad;border-bottom-color:#adadad;"></div>
<svg style="left:858px;top:699px" width="13" height="12" viewBox="0 0 13 12"><path d="M2 2 L11 10 M11 2 L2 10" stroke="#3a8ee6" stroke-width="3.1" stroke-linecap="round" fill="none"/><path d="M2 2 L11 10 M11 2 L2 10" stroke="#62aaf2" stroke-width="1.2" stroke-linecap="round" fill="none"/></svg>
<span class="t" style="left:30px;top:7.4px;font-size:12px;color:#000;transform:scaleX(0.9682);">Mantenimiento de plantillas de informes para la impresión en Word</span>
<span class="t" style="left:8px;top:31.6px;font-size:12px;color:#000;transform:scaleX(0.9600);">Plantillas</span>
<span class="t" style="left:67px;top:31.6px;font-size:12px;color:#000;transform:scaleX(0.9600);">Subplantillas</span>
<span class="t" style="left:145px;top:31.6px;font-size:12px;color:#000;transform:scaleX(0.9600);">Ver</span>
<span class="t" style="left:137px;top:54.8px;font-size:12px;color:#fff;font-weight:bold;transform:scaleX(0.9501);">Plantillas de Prevengos</span>
<span class="t" style="left:577px;top:54.8px;font-size:12px;color:#fff;font-weight:bold;transform:scaleX(0.9776);">Detalle de la plantilla seleccionada</span>
<span class="t" style="left:54px;top:77.0px;font-size:12px;color:#000;font-weight:bold;transform:scaleX(0.9545);">GENERAL</span>
<span class="t" style="left:73px;top:92.46000000000001px;font-size:12px;color:#000;transform:scaleX(0.8953);">Auditoría</span>
<span class="t" style="left:73px;top:107.92px;font-size:12px;color:#000;transform:scaleX(0.8557);">Carnets identificativos trabajadores de contratas</span>
<span class="t" style="left:73px;top:123.38px;font-size:12px;color:#000;transform:scaleX(0.8498);">Carnets identificativos trabajadores de contratas (Versión móvil)</span>
<span class="t" style="left:73px;top:138.84px;font-size:12px;color:#000;transform:scaleX(0.8517);">Carnets identificativos trabajadores propios</span>
<span class="t" style="left:73px;top:154.3px;font-size:12px;color:#000;transform:scaleX(0.8440);">Carnets identificativos trabajadores propios (Versión móvil)</span>
<span class="t" style="left:73px;top:169.76px;font-size:12px;color:#000;transform:scaleX(0.8618);">Certificados de descarga de documentos</span>
<span class="t" style="left:73px;top:185.22px;font-size:12px;color:#000;transform:scaleX(0.8611);">Cesión de datos de caracter personal</span>
<span class="t" style="left:73px;top:200.68px;font-size:12px;color:#000;transform:scaleX(0.8527);">Cuestionarios y listas de chequeo</span>
<span class="t" style="left:73px;top:216.14000000000001px;font-size:12px;color:#000;transform:scaleX(0.8601);">Etiquetas contraseñas cifrado de PDFs</span>
<span class="t" style="left:73px;top:231.60000000000002px;font-size:12px;color:#000;transform:scaleX(0.8569);">Etiquetas identificativas de maquinaria</span>
<span class="t" style="left:73px;top:247.06px;font-size:12px;color:#000;transform:scaleX(0.8613);">Etiquetas postales de clientes</span>
<span class="t" style="left:73px;top:262.52px;font-size:12px;color:#000;transform:scaleX(0.8574);">Etiquetas postales de preclientes</span>
<span class="t" style="left:73px;top:277.98px;font-size:12px;color:#000;transform:scaleX(0.8622);">Etiquetas trabajos cualificados</span>
<span class="t" style="left:73px;top:293.44px;font-size:12px;color:#000;transform:scaleX(0.8613);">Ficha de datos de trabajadores</span>
<span class="t" style="left:73px;top:308.9px;font-size:12px;color:#000;transform:scaleX(0.8611);">Listado de trabajadores</span>
<span class="t" style="left:73px;top:324.36px;font-size:12px;color:#000;transform:scaleX(0.8625);">Memoria anual del servicio de prevención</span>
<span class="t" style="left:73px;top:339.82px;font-size:12px;color:#000;transform:scaleX(0.8792);">Memorias anuales Orden TIN/2504/2010</span>
<span class="t" style="left:54px;top:355.28000000000003px;font-size:12px;color:#000;font-weight:bold;transform:scaleX(0.9803);">ADMINISTRACIÓN</span>
<span class="t" style="left:73px;top:370.74px;font-size:12px;color:#000;transform:scaleX(0.8649);">Contratos</span>
<span class="t" style="left:73px;top:386.20000000000005px;font-size:12px;color:#000;transform:scaleX(0.8657);">Contratos (específicos de VS)</span>
<span class="t" style="left:73px;top:401.66px;font-size:12px;color:#000;transform:scaleX(0.8782);">Facturas</span>
<span class="t" style="left:73px;top:417.12px;font-size:12px;color:#000;transform:scaleX(0.8536);">Informe de altas y bajas</span>
<span class="t" style="left:73px;top:432.58000000000004px;font-size:12px;color:#000;transform:scaleX(0.8802);">Notificación renovación de contrato</span>
<span class="t" style="left:73px;top:448.04px;font-size:12px;color:#000;transform:scaleX(0.8706);">Notificación vencimiento de recibos</span>
<span class="t" style="left:73px;top:463.5px;font-size:12px;color:#000;transform:scaleX(0.8584);">Presupuestos</span>
<span class="t" style="left:94px;top:478.96000000000004px;font-size:12px;color:#9a9a9a;transform:scaleX(0.8582);">* Presupuesto Modelo 1 (Prevengos)  [Desactivado]</span>
<span class="t" style="left:94px;top:494.42px;font-size:12px;color:#0000e0;transform:scaleX(0.8530);text-decoration:underline;">* Presupuesto Modelo 2 para clientes (Prevengos)</span>
<span class="t" style="left:94px;top:509.88px;font-size:12px;color:#000;transform:scaleX(0.8520);">* Presupuesto Modelo 3 para preclientes (Prevengos)</span>
<span class="t" style="left:94px;top:525.34px;font-size:12px;color:#0000e0;transform:scaleX(0.8484);">Presupuesto Modelo 2 para clientes (Prevengos) (COPIA)</span>
<span class="t" style="left:94px;top:540.8px;font-size:12px;color:#0000e0;transform:scaleX(0.8462);">Presupuesto Modelo 3 para preclientes (Prevengos) (COPIA)</span>
<span class="t" style="left:73px;top:556.26px;font-size:12px;color:#000;transform:scaleX(0.8630);">Presupuestos (específicos de VS)</span>
<span class="t" style="left:73px;top:571.72px;font-size:12px;color:#000;transform:scaleX(0.8852);">SEPA B2B</span>
<span class="t" style="left:73px;top:587.1800000000001px;font-size:12px;color:#000;transform:scaleX(0.8727);">SEPA CORE</span>
<span class="t" style="left:54px;top:602.64px;font-size:12px;color:#000;font-weight:bold;transform:scaleX(0.9620);">CONTABILIDAD</span>
<span class="t" style="left:73px;top:618.1px;font-size:12px;color:#000;transform:scaleX(0.8567);">Asientos contables (Facturas)</span>
<span class="t" style="left:73px;top:633.5600000000001px;font-size:12px;color:#000;transform:scaleX(0.8638);">Asientos contables (Recibos)</span>
<span class="t" style="left:54px;top:649.02px;font-size:12px;color:#000;font-weight:bold;transform:scaleX(0.9459);">FORMACIÓN</span>
<span class="t" style="left:425px;top:80.5px;font-size:12px;color:#fff;font-weight:bold;transform:scaleX(0.9648);">Datos generales de la plantilla</span>
<span class="t" style="left:425px;top:413.5px;font-size:12px;color:#fff;font-weight:bold;transform:scaleX(0.9344);">Subplantillas utilizadas</span>
<span class="t" style="left:423px;top:106.5px;font-size:12px;color:#000;transform:scaleX(0.8586);">Área: Administración</span>
<span class="t" style="left:423px;top:126.5px;font-size:12px;color:#000;transform:scaleX(0.8571);">Subárea: Presupuestos</span>
<span class="t" style="left:423px;top:152px;font-size:12px;color:#000;font-weight:bold;transform:scaleX(0.9624);">Plantilla: * Presupuesto Modelo 3 para preclientes (Prevengos)</span>
<span class="t" style="left:423px;top:175.6px;font-size:12px;color:#000;transform:scaleX(0.8918);">Modelo: 3</span>
<span class="t" style="left:423px;top:196.8px;font-size:12px;color:#000;transform:scaleX(0.8470);">Descripción:</span>
<span class="t" style="left:423px;top:209px;font-size:12px;color:#000;transform:scaleX(0.8458);">Plantilla estándar de Prevengos para la impresión de Presupuestos para empresas</span>
<span class="t" style="left:423px;top:221.6px;font-size:12px;color:#000;transform:scaleX(0.8470);">precliente.</span>
<span class="t" style="left:423px;top:246.8px;font-size:12px;color:#000;transform:scaleX(0.8541);">Esta plantilla no puede ser eliminada. Es la plantilla por defecto de Prevengos para la</span>
<span class="t" style="left:423px;top:259.2px;font-size:12px;color:#000;transform:scaleX(0.8470);">impresión de este informe</span>
<span class="t" style="left:423px;top:284.2px;font-size:12px;color:#000;transform:scaleX(0.8470);">Nota:</span>
<span class="t" style="left:423px;top:296.8px;font-size:12px;color:#000;transform:scaleX(0.8471);">No alterar las subplantillas y marcadores con formato tabla</span>
<span class="t" style="left:423px;top:318.3px;font-size:12px;color:#000;transform:scaleX(0.8470);">Archivo físico</span>
<span class="t" style="left:423px;top:335.5px;font-size:12px;color:#000;transform:scaleX(0.8596);">Ruta: [UBICACIONES]\PlantillasParaImpresion\Administración\Presupuestos</span>
<span class="t" style="left:423px;top:348.3px;font-size:12px;color:#000;transform:scaleX(0.8470);">Prevención\</span>
<span class="t" style="left:423px;top:367.7px;font-size:12px;color:#000;transform:scaleX(0.8716);">Archivo: Presupuesto3_Prevengos.dot</span>
<span class="t" style="left:429px;top:438.1px;font-size:12px;color:#000;transform:scaleX(0.8507);">Centros de trabajo. Listado de centros de la empresa (con num. de trabajadores)</span>
<span class="t" style="left:429px;top:464.3px;font-size:12px;color:#000;transform:scaleX(0.8446);">Centros de trabajo. Listado de centros de la empresa (sin num. de trabajadores)</span>
<span class="t" style="left:429px;top:489.04999999999995px;font-size:12px;color:#000;transform:scaleX(0.8507);"> Centros de trabajo. Listado de centros del presupuesto (con num. de trabajadores por</span>
<span class="t" style="left:426px;top:501.54999999999995px;font-size:12px;color:#000;transform:scaleX(0.8470);">especialidad)</span>
<span class="t" style="left:429px;top:525.3999999999999px;font-size:12px;color:#000;transform:scaleX(0.8531);">Centros de trabajo. Listado de centros del presupuesto (con num. de trabajadores)</span>
<span class="t" style="left:429px;top:551.5999999999999px;font-size:12px;color:#000;transform:scaleX(0.8494);">Centros de trabajo. Listado de centros del presupuesto (sin num. de trabajadores)</span>
<span class="t" style="left:429px;top:577.8px;font-size:12px;color:#fff;transform:scaleX(0.8671);">Datos generales. Subplantilla principal</span>
<span class="t" style="left:429px;top:603.9999999999999px;font-size:12px;color:#000;transform:scaleX(0.8664);">General. Textos fijos</span>
<span class="t" style="left:429px;top:630.0999999999999px;font-size:12px;color:#000;transform:scaleX(0.8683);">Resumen Tabla resumen de tareas</span>
<span class="t" style="left:429px;top:656.3px;font-size:12px;color:#000;transform:scaleX(0.8529);">Resumen. Cabecera para resumen de servicios y tareas</span>
<span class="t" style="left:876px;top:697.5px;font-size:12px;color:#000;transform:scaleX(0.8687);">Cerrar  [Esc]</span>
</div></body></html>
